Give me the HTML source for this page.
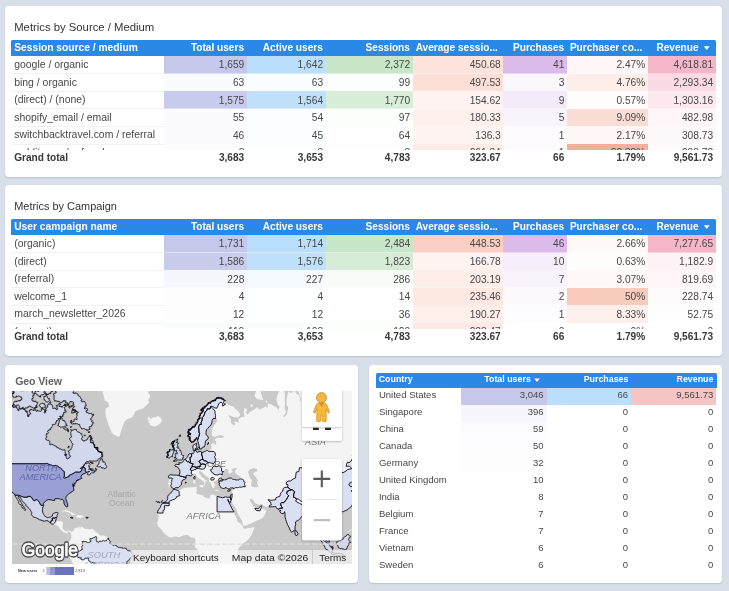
<!DOCTYPE html>
<html><head><meta charset="utf-8"><title>Dashboard</title>
<style>
html,body{margin:0;padding:0;}
body{width:729px;height:591px;overflow:hidden;background:#d9dfe8;font-family:"Liberation Sans",sans-serif;position:relative;}
#w{position:absolute;left:0;top:0;width:729px;height:591px;will-change:transform;}
.card{position:absolute;background:#fff;border-radius:4px;box-shadow:0 1px 1.5px rgba(120,130,150,.32);}
.t{position:absolute;white-space:nowrap;line-height:1;}
.c{position:absolute;}
.title{font-size:11.3px;color:#333;}
.hd{position:absolute;background:#2a88e6;border-radius:1.5px 1.5px 0 0;}
.h{font-weight:bold;color:#fff;font-size:10.1px;}
.v{font-size:10.45px;color:#484848;}
.n{font-size:10.2px;color:#484848;}
.b{font-size:10.1px;font-weight:bold;color:#383838;}
.ln{position:absolute;height:1px;background:#f5f5f5;}
</style></head>
<body>
<div id="w">
<div class="card" style="left:5px;top:6px;width:717px;height:171px"></div>
<div class="t title" style="left:14.2px;top:22.0px;">Metrics by Source / Medium</div>
<div class="hd" style="left:11px;top:40.4px;width:704.6px;height:15.6px"></div>
<div class="t h" style="left:14.2px;top:43.3px;font-size:10.25px">Session source / medium</div>
<div class="t h" style="right:485.0px;top:43.3px;">Total users</div>
<div class="t h" style="right:406.2px;top:43.3px;">Active users</div>
<div class="t h" style="right:319.1px;top:43.3px;">Sessions</div>
<div class="t h" style="left:415.7px;top:43.3px;">Average sessio...</div>
<div class="t h" style="right:164.89999999999998px;top:43.3px;">Purchases</div>
<div class="t h" style="left:569.9px;top:43.3px;">Purchaser co...</div>
<div class="t h" style="right:30.5px;top:43.3px;">Revenue</div>
<div class="c" style="left:703.8px;top:46.2px;width:5.9px;height:3.9px;background:#fff;clip-path:polygon(0 0,100% 0,50% 100%)"></div>
<div class="c" style="left:11px;top:56px;width:704.6px;height:93.6px;overflow:hidden">
<div class="c" style="left:153.3px;top:0.0px;width:82.5px;height:17.6px;background:#c5c8ea"></div>
<div class="c" style="left:235.8px;top:0.0px;width:78.8px;height:17.6px;background:#bbdefb"></div>
<div class="c" style="left:314.6px;top:0.0px;width:87.1px;height:17.6px;background:#c8e6c9"></div>
<div class="c" style="left:401.7px;top:0.0px;width:90.6px;height:17.6px;background:#fde3dc"></div>
<div class="c" style="left:492.3px;top:0.0px;width:63.6px;height:17.6px;background:#dbbbe9"></div>
<div class="c" style="left:555.9px;top:0.0px;width:80.9px;height:17.6px;background:#fef7f5"></div>
<div class="c" style="left:636.8px;top:0.0px;width:67.8px;height:17.6px;background:#f5b6c9"></div>
<div class="ln" style="left:0;top:17.1px;width:153.3px;background:#f1f1f1"></div>
<div class="ln" style="left:153.3px;top:17.1px;width:551.3px;background:rgba(255,255,255,.42)"></div>
<div class="t v" style="left:3.2px;top:4.0px">google / organic</div>
<div class="t n" style="right:471.3px;top:4.3px">1,659</div>
<div class="t n" style="right:392.5px;top:4.3px">1,642</div>
<div class="t n" style="right:305.4px;top:4.3px">2,372</div>
<div class="t n" style="right:214.8px;top:4.3px">450.68</div>
<div class="t n" style="right:151.2px;top:4.3px">41</div>
<div class="t n" style="right:70.3px;top:4.3px">2.47%</div>
<div class="t n" style="right:2.5px;top:4.3px">4,618.81</div>
<div class="c" style="left:153.3px;top:17.6px;width:82.5px;height:17.6px;background:#fafbfd"></div>
<div class="c" style="left:235.8px;top:17.6px;width:78.8px;height:17.6px;background:#fafdff"></div>
<div class="c" style="left:314.6px;top:17.6px;width:87.1px;height:17.6px;background:#fcfefc"></div>
<div class="c" style="left:401.7px;top:17.6px;width:90.6px;height:17.6px;background:#fcdfd7"></div>
<div class="c" style="left:492.3px;top:17.6px;width:63.6px;height:17.6px;background:#fbf8fd"></div>
<div class="c" style="left:555.9px;top:17.6px;width:80.9px;height:17.6px;background:#fdeee9"></div>
<div class="c" style="left:636.8px;top:17.6px;width:67.8px;height:17.6px;background:#fadae4"></div>
<div class="ln" style="left:0;top:34.7px;width:153.3px;background:#f1f1f1"></div>
<div class="ln" style="left:153.3px;top:34.7px;width:551.3px;background:rgba(255,255,255,.42)"></div>
<div class="t v" style="left:3.2px;top:21.6px">bing / organic</div>
<div class="t n" style="right:471.3px;top:21.9px">63</div>
<div class="t n" style="right:392.5px;top:21.9px">63</div>
<div class="t n" style="right:305.4px;top:21.9px">99</div>
<div class="t n" style="right:214.8px;top:21.9px">497.53</div>
<div class="t n" style="right:151.2px;top:21.9px">3</div>
<div class="t n" style="right:70.3px;top:21.9px">4.76%</div>
<div class="t n" style="right:2.5px;top:21.9px">2,293.34</div>
<div class="c" style="left:153.3px;top:35.2px;width:82.5px;height:17.6px;background:#c8cbeb"></div>
<div class="c" style="left:235.8px;top:35.2px;width:78.8px;height:17.6px;background:#bee0fb"></div>
<div class="c" style="left:314.6px;top:35.2px;width:87.1px;height:17.6px;background:#d8eed9"></div>
<div class="c" style="left:401.7px;top:35.2px;width:90.6px;height:17.6px;background:#fef3f1"></div>
<div class="c" style="left:492.3px;top:35.2px;width:63.6px;height:17.6px;background:#f4ebf8"></div>
<div class="c" style="left:555.9px;top:35.2px;width:80.9px;height:17.6px;background:#fffcfb"></div>
<div class="c" style="left:636.8px;top:35.2px;width:67.8px;height:17.6px;background:#fce9ef"></div>
<div class="ln" style="left:0;top:52.3px;width:153.3px;background:#f1f1f1"></div>
<div class="ln" style="left:153.3px;top:52.3px;width:551.3px;background:rgba(255,255,255,.42)"></div>
<div class="t v" style="left:3.2px;top:39.2px">(direct) / (none)</div>
<div class="t n" style="right:471.3px;top:39.5px">1,575</div>
<div class="t n" style="right:392.5px;top:39.5px">1,564</div>
<div class="t n" style="right:305.4px;top:39.5px">1,770</div>
<div class="t n" style="right:214.8px;top:39.5px">154.62</div>
<div class="t n" style="right:151.2px;top:39.5px">9</div>
<div class="t n" style="right:70.3px;top:39.5px">0.57%</div>
<div class="t n" style="right:2.5px;top:39.5px">1,303.16</div>
<div class="c" style="left:153.3px;top:52.8px;width:82.5px;height:17.6px;background:#fbfbfe"></div>
<div class="c" style="left:235.8px;top:52.8px;width:78.8px;height:17.6px;background:#fbfdff"></div>
<div class="c" style="left:314.6px;top:52.8px;width:87.1px;height:17.6px;background:#fcfefc"></div>
<div class="c" style="left:401.7px;top:52.8px;width:90.6px;height:17.6px;background:#fef1ed"></div>
<div class="c" style="left:492.3px;top:52.8px;width:63.6px;height:17.6px;background:#f9f3fb"></div>
<div class="c" style="left:555.9px;top:52.8px;width:80.9px;height:17.6px;background:#faded5"></div>
<div class="c" style="left:636.8px;top:52.8px;width:67.8px;height:17.6px;background:#fef6f9"></div>
<div class="ln" style="left:0;top:69.9px;width:153.3px;background:#f1f1f1"></div>
<div class="ln" style="left:153.3px;top:69.9px;width:551.3px;background:rgba(255,255,255,.42)"></div>
<div class="t v" style="left:3.2px;top:56.8px">shopify_email / email</div>
<div class="t n" style="right:471.3px;top:57.1px">55</div>
<div class="t n" style="right:392.5px;top:57.1px">54</div>
<div class="t n" style="right:305.4px;top:57.1px">97</div>
<div class="t n" style="right:214.8px;top:57.1px">180.33</div>
<div class="t n" style="right:151.2px;top:57.1px">5</div>
<div class="t n" style="right:70.3px;top:57.1px">9.09%</div>
<div class="t n" style="right:2.5px;top:57.1px">482.98</div>
<div class="c" style="left:153.3px;top:70.4px;width:82.5px;height:17.6px;background:#fbfbfe"></div>
<div class="c" style="left:235.8px;top:70.4px;width:78.8px;height:17.6px;background:#fbfdff"></div>
<div class="c" style="left:314.6px;top:70.4px;width:87.1px;height:17.6px;background:#fdfefd"></div>
<div class="c" style="left:401.7px;top:70.4px;width:90.6px;height:17.6px;background:#fef5f3"></div>
<div class="c" style="left:492.3px;top:70.4px;width:63.6px;height:17.6px;background:#fdfbfe"></div>
<div class="c" style="left:555.9px;top:70.4px;width:80.9px;height:17.6px;background:#fef7f5"></div>
<div class="c" style="left:636.8px;top:70.4px;width:67.8px;height:17.6px;background:#fef9fb"></div>
<div class="ln" style="left:0;top:87.5px;width:153.3px;background:#f1f1f1"></div>
<div class="ln" style="left:153.3px;top:87.5px;width:551.3px;background:rgba(255,255,255,.42)"></div>
<div class="t v" style="left:3.2px;top:74.4px">switchbacktravel.com / referral</div>
<div class="t n" style="right:471.3px;top:74.7px">46</div>
<div class="t n" style="right:392.5px;top:74.7px">45</div>
<div class="t n" style="right:305.4px;top:74.7px">64</div>
<div class="t n" style="right:214.8px;top:74.7px">136.3</div>
<div class="t n" style="right:151.2px;top:74.7px">1</div>
<div class="t n" style="right:70.3px;top:74.7px">2.17%</div>
<div class="t n" style="right:2.5px;top:74.7px">308.73</div>
<div class="c" style="left:153.3px;top:88.0px;width:82.5px;height:17.6px;background:#fdfdfe"></div>
<div class="c" style="left:235.8px;top:88.0px;width:78.8px;height:17.6px;background:#fcfeff"></div>
<div class="c" style="left:314.6px;top:88.0px;width:87.1px;height:17.6px;background:#fdfefd"></div>
<div class="c" style="left:401.7px;top:88.0px;width:90.6px;height:17.6px;background:#fdece7"></div>
<div class="c" style="left:492.3px;top:88.0px;width:63.6px;height:17.6px;background:#fdfbfe"></div>
<div class="c" style="left:555.9px;top:88.0px;width:80.9px;height:17.6px;background:#f4b09a"></div>
<div class="c" style="left:636.8px;top:88.0px;width:67.8px;height:17.6px;background:#fefbfc"></div>
<div class="ln" style="left:0;top:105.1px;width:153.3px;background:#f1f1f1"></div>
<div class="ln" style="left:153.3px;top:105.1px;width:551.3px;background:rgba(255,255,255,.42)"></div>
<div class="t v" style="left:3.2px;top:92.0px">reddit.com / referral</div>
<div class="t n" style="right:471.3px;top:92.3px">3</div>
<div class="t n" style="right:392.5px;top:92.3px">3</div>
<div class="t n" style="right:305.4px;top:92.3px">3</div>
<div class="t n" style="right:214.8px;top:92.3px">261.84</div>
<div class="t n" style="right:151.2px;top:92.3px">1</div>
<div class="t n" style="right:70.3px;top:92.3px">33.33%</div>
<div class="t n" style="right:2.5px;top:92.3px">233.78</div>
</div>
<div class="t b" style="left:14.2px;top:153.3px;">Grand total</div>
<div class="t b" style="right:484.79999999999995px;top:153.3px;">3,683</div>
<div class="t b" style="right:406.0px;top:153.3px;">3,653</div>
<div class="t b" style="right:318.90000000000003px;top:153.3px;">4,783</div>
<div class="t b" style="right:228.3px;top:153.3px;">323.67</div>
<div class="t b" style="right:164.70000000000005px;top:153.3px;">66</div>
<div class="t b" style="right:83.80000000000007px;top:153.3px;">1.79%</div>
<div class="t b" style="right:16.0px;top:153.3px;">9,561.73</div>
<div class="card" style="left:5px;top:185px;width:717px;height:171px"></div>
<div class="t title" style="left:14.2px;top:201.0px;font-size:10.95px">Metrics by Campaign</div>
<div class="hd" style="left:11px;top:219.4px;width:704.6px;height:15.6px"></div>
<div class="t h" style="left:14.2px;top:222.3px;font-size:10.25px">User campaign name</div>
<div class="t h" style="right:485.0px;top:222.3px;">Total users</div>
<div class="t h" style="right:406.2px;top:222.3px;">Active users</div>
<div class="t h" style="right:319.1px;top:222.3px;">Sessions</div>
<div class="t h" style="left:415.7px;top:222.3px;">Average sessio...</div>
<div class="t h" style="right:164.89999999999998px;top:222.3px;">Purchases</div>
<div class="t h" style="left:569.9px;top:222.3px;">Purchaser co...</div>
<div class="t h" style="right:30.5px;top:222.3px;">Revenue</div>
<div class="c" style="left:703.8px;top:225.2px;width:5.9px;height:3.9px;background:#fff;clip-path:polygon(0 0,100% 0,50% 100%)"></div>
<div class="c" style="left:11px;top:235px;width:704.6px;height:93.6px;overflow:hidden">
<div class="c" style="left:153.3px;top:0.0px;width:82.5px;height:17.6px;background:#c5c8ea"></div>
<div class="c" style="left:235.8px;top:0.0px;width:78.8px;height:17.6px;background:#bbdefb"></div>
<div class="c" style="left:314.6px;top:0.0px;width:87.1px;height:17.6px;background:#c8e6c9"></div>
<div class="c" style="left:401.7px;top:0.0px;width:90.6px;height:17.6px;background:#fbcfc3"></div>
<div class="c" style="left:492.3px;top:0.0px;width:63.6px;height:17.6px;background:#dbbbe9"></div>
<div class="c" style="left:555.9px;top:0.0px;width:80.9px;height:17.6px;background:#fef9f8"></div>
<div class="c" style="left:636.8px;top:0.0px;width:67.8px;height:17.6px;background:#f5b6c9"></div>
<div class="ln" style="left:0;top:17.1px;width:153.3px;background:#f1f1f1"></div>
<div class="ln" style="left:153.3px;top:17.1px;width:551.3px;background:rgba(255,255,255,.42)"></div>
<div class="t v" style="left:3.2px;top:4.0px">(organic)</div>
<div class="t n" style="right:471.3px;top:4.3px">1,731</div>
<div class="t n" style="right:392.5px;top:4.3px">1,714</div>
<div class="t n" style="right:305.4px;top:4.3px">2,484</div>
<div class="t n" style="right:214.8px;top:4.3px">448.53</div>
<div class="t n" style="right:151.2px;top:4.3px">46</div>
<div class="t n" style="right:70.3px;top:4.3px">2.66%</div>
<div class="t n" style="right:2.5px;top:4.3px">7,277.65</div>
<div class="c" style="left:153.3px;top:17.6px;width:82.5px;height:17.6px;background:#caccec"></div>
<div class="c" style="left:235.8px;top:17.6px;width:78.8px;height:17.6px;background:#c0e1fb"></div>
<div class="c" style="left:314.6px;top:17.6px;width:87.1px;height:17.6px;background:#d6ecd6"></div>
<div class="c" style="left:401.7px;top:17.6px;width:90.6px;height:17.6px;background:#fef3f1"></div>
<div class="c" style="left:492.3px;top:17.6px;width:63.6px;height:17.6px;background:#f6eefa"></div>
<div class="c" style="left:555.9px;top:17.6px;width:80.9px;height:17.6px;background:#fffdfc"></div>
<div class="c" style="left:636.8px;top:17.6px;width:67.8px;height:17.6px;background:#fdf3f6"></div>
<div class="ln" style="left:0;top:34.7px;width:153.3px;background:#f1f1f1"></div>
<div class="ln" style="left:153.3px;top:34.7px;width:551.3px;background:rgba(255,255,255,.42)"></div>
<div class="t v" style="left:3.2px;top:21.6px">(direct)</div>
<div class="t n" style="right:471.3px;top:21.9px">1,586</div>
<div class="t n" style="right:392.5px;top:21.9px">1,576</div>
<div class="t n" style="right:305.4px;top:21.9px">1,823</div>
<div class="t n" style="right:214.8px;top:21.9px">166.78</div>
<div class="t n" style="right:151.2px;top:21.9px">10</div>
<div class="t n" style="right:70.3px;top:21.9px">0.63%</div>
<div class="t n" style="right:2.5px;top:21.9px">1,182.9</div>
<div class="c" style="left:153.3px;top:35.2px;width:82.5px;height:17.6px;background:#f6f7fc"></div>
<div class="c" style="left:235.8px;top:35.2px;width:78.8px;height:17.6px;background:#f5fafe"></div>
<div class="c" style="left:314.6px;top:35.2px;width:87.1px;height:17.6px;background:#f8fcf9"></div>
<div class="c" style="left:401.7px;top:35.2px;width:90.6px;height:17.6px;background:#feeee9"></div>
<div class="c" style="left:492.3px;top:35.2px;width:63.6px;height:17.6px;background:#f9f3fb"></div>
<div class="c" style="left:555.9px;top:35.2px;width:80.9px;height:17.6px;background:#fef8f6"></div>
<div class="c" style="left:636.8px;top:35.2px;width:67.8px;height:17.6px;background:#fef6f9"></div>
<div class="ln" style="left:0;top:52.3px;width:153.3px;background:#f1f1f1"></div>
<div class="ln" style="left:153.3px;top:52.3px;width:551.3px;background:rgba(255,255,255,.42)"></div>
<div class="t v" style="left:3.2px;top:39.2px">(referral)</div>
<div class="t n" style="right:471.3px;top:39.5px">228</div>
<div class="t n" style="right:392.5px;top:39.5px">227</div>
<div class="t n" style="right:305.4px;top:39.5px">286</div>
<div class="t n" style="right:214.8px;top:39.5px">203.19</div>
<div class="t n" style="right:151.2px;top:39.5px">7</div>
<div class="t n" style="right:70.3px;top:39.5px">3.07%</div>
<div class="t n" style="right:2.5px;top:39.5px">819.69</div>
<div class="c" style="left:153.3px;top:52.8px;width:82.5px;height:17.6px;background:#fdfdfe"></div>
<div class="c" style="left:235.8px;top:52.8px;width:78.8px;height:17.6px;background:#fdfeff"></div>
<div class="c" style="left:314.6px;top:52.8px;width:87.1px;height:17.6px;background:#fefefe"></div>
<div class="c" style="left:401.7px;top:52.8px;width:90.6px;height:17.6px;background:#fde8e2"></div>
<div class="c" style="left:492.3px;top:52.8px;width:63.6px;height:17.6px;background:#fcfafd"></div>
<div class="c" style="left:555.9px;top:52.8px;width:80.9px;height:17.6px;background:#f8cbbc"></div>
<div class="c" style="left:636.8px;top:52.8px;width:67.8px;height:17.6px;background:#fefbfc"></div>
<div class="ln" style="left:0;top:69.9px;width:153.3px;background:#f1f1f1"></div>
<div class="ln" style="left:153.3px;top:69.9px;width:551.3px;background:rgba(255,255,255,.42)"></div>
<div class="t v" style="left:3.2px;top:56.8px">welcome_1</div>
<div class="t n" style="right:471.3px;top:57.1px">4</div>
<div class="t n" style="right:392.5px;top:57.1px">4</div>
<div class="t n" style="right:305.4px;top:57.1px">14</div>
<div class="t n" style="right:214.8px;top:57.1px">235.46</div>
<div class="t n" style="right:151.2px;top:57.1px">2</div>
<div class="t n" style="right:70.3px;top:57.1px">50%</div>
<div class="t n" style="right:2.5px;top:57.1px">228.74</div>
<div class="c" style="left:153.3px;top:70.4px;width:82.5px;height:17.6px;background:#fdfdfe"></div>
<div class="c" style="left:235.8px;top:70.4px;width:78.8px;height:17.6px;background:#fcfeff"></div>
<div class="c" style="left:314.6px;top:70.4px;width:87.1px;height:17.6px;background:#fdfefd"></div>
<div class="c" style="left:401.7px;top:70.4px;width:90.6px;height:17.6px;background:#feefeb"></div>
<div class="c" style="left:492.3px;top:70.4px;width:63.6px;height:17.6px;background:#fdfcfe"></div>
<div class="c" style="left:555.9px;top:70.4px;width:80.9px;height:17.6px;background:#fdefeb"></div>
<div class="c" style="left:636.8px;top:70.4px;width:67.8px;height:17.6px;background:#fffdfd"></div>
<div class="ln" style="left:0;top:87.5px;width:153.3px;background:#f1f1f1"></div>
<div class="ln" style="left:153.3px;top:87.5px;width:551.3px;background:rgba(255,255,255,.42)"></div>
<div class="t v" style="left:3.2px;top:74.4px">march_newsletter_2026</div>
<div class="t n" style="right:471.3px;top:74.7px">12</div>
<div class="t n" style="right:392.5px;top:74.7px">12</div>
<div class="t n" style="right:305.4px;top:74.7px">36</div>
<div class="t n" style="right:214.8px;top:74.7px">190.27</div>
<div class="t n" style="right:151.2px;top:74.7px">1</div>
<div class="t n" style="right:70.3px;top:74.7px">8.33%</div>
<div class="t n" style="right:2.5px;top:74.7px">52.75</div>
<div class="c" style="left:153.3px;top:88.0px;width:82.5px;height:17.6px;background:#fafbfd"></div>
<div class="c" style="left:235.8px;top:88.0px;width:78.8px;height:17.6px;background:#fafcff"></div>
<div class="c" style="left:314.6px;top:88.0px;width:87.1px;height:17.6px;background:#fcfefc"></div>
<div class="c" style="left:401.7px;top:88.0px;width:90.6px;height:17.6px;background:#fde9e4"></div>
<div class="ln" style="left:0;top:105.1px;width:153.3px;background:#f1f1f1"></div>
<div class="ln" style="left:153.3px;top:105.1px;width:551.3px;background:rgba(255,255,255,.42)"></div>
<div class="t v" style="left:3.2px;top:92.0px">(not set)</div>
<div class="t n" style="right:471.3px;top:92.3px">110</div>
<div class="t n" style="right:392.5px;top:92.3px">108</div>
<div class="t n" style="right:305.4px;top:92.3px">120</div>
<div class="t n" style="right:214.8px;top:92.3px">223.47</div>
<div class="t n" style="right:151.2px;top:92.3px">0</div>
<div class="t n" style="right:70.3px;top:92.3px">0%</div>
<div class="t n" style="right:2.5px;top:92.3px">0</div>
</div>
<div class="t b" style="left:14.2px;top:332.3px;">Grand total</div>
<div class="t b" style="right:484.79999999999995px;top:332.3px;">3,683</div>
<div class="t b" style="right:406.0px;top:332.3px;">3,653</div>
<div class="t b" style="right:318.90000000000003px;top:332.3px;">4,783</div>
<div class="t b" style="right:228.3px;top:332.3px;">323.67</div>
<div class="t b" style="right:164.70000000000005px;top:332.3px;">66</div>
<div class="t b" style="right:83.80000000000007px;top:332.3px;">1.79%</div>
<div class="t b" style="right:16.0px;top:332.3px;">9,561.73</div>
<div class="card" style="left:368.5px;top:365px;width:353.5px;height:217.5px"></div>
<div class="hd" style="left:376px;top:372.5px;width:340.5px;height:15px"></div>
<div class="t h" style="left:378.7px;top:375.1px;font-size:8.85px">Country</div>
<div class="t h" style="right:198.20000000000005px;top:375.1px;font-size:8.85px">Total users</div>
<div class="c" style="left:534.2px;top:378.4px;width:5.6px;height:3.6px;background:#fff;clip-path:polygon(0 0,100% 0,50% 100%)"></div>
<div class="t h" style="right:100.60000000000002px;top:375.1px;font-size:8.85px">Purchases</div>
<div class="t h" style="right:15.600000000000023px;top:375.1px;font-size:8.85px">Revenue</div>
<div class="c" style="left:461.2px;top:387.5px;width:85.5px;height:17.0px;background:#c5c8ea"></div>
<div class="c" style="left:546.7px;top:387.5px;width:84.5px;height:17.0px;background:#bbdefb"></div>
<div class="c" style="left:631.2px;top:387.5px;width:85.3px;height:17.0px;background:#f5c4c4"></div>
<div class="t v" style="left:378.9px;top:390.3px;font-size:9.55px">United States</div>
<div class="t v" style="right:185.5px;top:390.3px;font-size:9.5px">3,046</div>
<div class="t v" style="right:101.0px;top:390.3px;font-size:9.5px">66</div>
<div class="t v" style="right:15.700000000000045px;top:390.3px;font-size:9.5px">9,561.73</div>
<div class="c" style="left:461.2px;top:404.5px;width:85.5px;height:17.0px;background:#f6f6fc"></div>
<div class="t v" style="left:378.9px;top:407.3px;font-size:9.55px">Singapore</div>
<div class="t v" style="right:185.5px;top:407.3px;font-size:9.5px">396</div>
<div class="t v" style="right:101.0px;top:407.3px;font-size:9.5px">0</div>
<div class="t v" style="right:15.700000000000045px;top:407.3px;font-size:9.5px">0</div>
<div class="c" style="left:461.2px;top:421.5px;width:85.5px;height:17.0px;background:#fcfcfe"></div>
<div class="t v" style="left:378.9px;top:424.3px;font-size:9.55px">China</div>
<div class="t v" style="right:185.5px;top:424.3px;font-size:9.5px">59</div>
<div class="t v" style="right:101.0px;top:424.3px;font-size:9.5px">0</div>
<div class="t v" style="right:15.700000000000045px;top:424.3px;font-size:9.5px">0</div>
<div class="c" style="left:461.2px;top:438.5px;width:85.5px;height:17.0px;background:#fdfdfe"></div>
<div class="t v" style="left:378.9px;top:441.3px;font-size:9.55px">Canada</div>
<div class="t v" style="right:185.5px;top:441.3px;font-size:9.5px">50</div>
<div class="t v" style="right:101.0px;top:441.3px;font-size:9.5px">0</div>
<div class="t v" style="right:15.700000000000045px;top:441.3px;font-size:9.5px">0</div>
<div class="c" style="left:461.2px;top:455.5px;width:85.5px;height:17.0px;background:#fdfdfe"></div>
<div class="t v" style="left:378.9px;top:458.3px;font-size:9.55px">Germany</div>
<div class="t v" style="right:185.5px;top:458.3px;font-size:9.5px">32</div>
<div class="t v" style="right:101.0px;top:458.3px;font-size:9.5px">0</div>
<div class="t v" style="right:15.700000000000045px;top:458.3px;font-size:9.5px">0</div>
<div class="c" style="left:461.2px;top:472.5px;width:85.5px;height:17.0px;background:#fefeff"></div>
<div class="t v" style="left:378.9px;top:475.3px;font-size:9.55px">United Kingdom</div>
<div class="t v" style="right:185.5px;top:475.3px;font-size:9.5px">10</div>
<div class="t v" style="right:101.0px;top:475.3px;font-size:9.5px">0</div>
<div class="t v" style="right:15.700000000000045px;top:475.3px;font-size:9.5px">0</div>
<div class="c" style="left:461.2px;top:489.5px;width:85.5px;height:17.0px;background:#fefeff"></div>
<div class="t v" style="left:378.9px;top:492.3px;font-size:9.55px">India</div>
<div class="t v" style="right:185.5px;top:492.3px;font-size:9.5px">8</div>
<div class="t v" style="right:101.0px;top:492.3px;font-size:9.5px">0</div>
<div class="t v" style="right:15.700000000000045px;top:492.3px;font-size:9.5px">0</div>
<div class="c" style="left:461.2px;top:506.5px;width:85.5px;height:17.0px;background:#fefeff"></div>
<div class="t v" style="left:378.9px;top:509.3px;font-size:9.55px">Belgium</div>
<div class="t v" style="right:185.5px;top:509.3px;font-size:9.5px">7</div>
<div class="t v" style="right:101.0px;top:509.3px;font-size:9.5px">0</div>
<div class="t v" style="right:15.700000000000045px;top:509.3px;font-size:9.5px">0</div>
<div class="c" style="left:461.2px;top:523.5px;width:85.5px;height:17.0px;background:#fefeff"></div>
<div class="t v" style="left:378.9px;top:526.3px;font-size:9.55px">France</div>
<div class="t v" style="right:185.5px;top:526.3px;font-size:9.5px">7</div>
<div class="t v" style="right:101.0px;top:526.3px;font-size:9.5px">0</div>
<div class="t v" style="right:15.700000000000045px;top:526.3px;font-size:9.5px">0</div>
<div class="c" style="left:461.2px;top:540.5px;width:85.5px;height:17.0px;background:#fefeff"></div>
<div class="t v" style="left:378.9px;top:543.3px;font-size:9.55px">Vietnam</div>
<div class="t v" style="right:185.5px;top:543.3px;font-size:9.5px">6</div>
<div class="t v" style="right:101.0px;top:543.3px;font-size:9.5px">0</div>
<div class="t v" style="right:15.700000000000045px;top:543.3px;font-size:9.5px">0</div>
<div class="c" style="left:461.2px;top:557.5px;width:85.5px;height:17.0px;background:#fefeff"></div>
<div class="t v" style="left:378.9px;top:560.3px;font-size:9.55px">Sweden</div>
<div class="t v" style="right:185.5px;top:560.3px;font-size:9.5px">6</div>
<div class="t v" style="right:101.0px;top:560.3px;font-size:9.5px">0</div>
<div class="t v" style="right:15.700000000000045px;top:560.3px;font-size:9.5px">0</div>
<div class="card" style="left:5px;top:365px;width:353px;height:217.5px"></div>
<div class="t " style="left:15.2px;top:376.4px;font-size:10.6px;color:#636363;font-weight:bold;letter-spacing:-.1px">Geo View</div>
<svg style="position:absolute;left:12px;top:390.5px" width="340" height="173.1" viewBox="0 0 340 173.1" font-family="Liberation Sans, sans-serif">
<rect width="340" height="173.1" fill="#c9c9c9"/>
<path d="M65.7,-34.1L72.8,-17.9L84.2,-17.9L88.4,-9.5L89.9,-1.9L91.6,5.1L92.7,9.5L96.3,11.6L97.0,15.6L93.7,17.6L93.4,23.2L94.8,28.5L96.3,33.5L98.4,38.3L99.8,41.9L101.9,43.4L104.1,44.8L106.2,46.0L107.9,45.1L108.6,41.3L109.8,37.4L111.5,33.5L112.6,30.2L115.5,27.9L118.3,27.2L121.1,25.0L123.3,20.3L126.8,18.8L131.1,17.6L133.9,14.9L137.1,11.6L136.1,9.5L138.2,5.1L136.1,1.4L137.5,-1.9L139.6,-9.5L142.5,-24.0L141.1,-45.5L84.2,-63.8ZM134.9,28.2L136.8,25.4L138.9,28.2L140.6,26.5L143.9,26.1L146.3,25.0L148.6,26.8L150.0,29.6L148.9,31.9L146.7,33.5L143.2,35.5L140.6,35.2L137.5,33.9L138.2,32.2L135.4,30.6L137.9,29.2ZM38.4,132.0L42.6,131.4L44.1,130.2L47.2,130.1L49.3,130.2L50.9,131.1L51.0,132.6L50.5,135.1L50.5,137.3L51.9,139.1L53.2,140.1L54.6,140.3L56.0,139.4L57.4,139.4L59.3,140.6L59.7,141.7L58.7,142.7L58.1,141.3L56.7,140.3L55.2,141.2L55.4,142.4L53.6,142.0L51.7,141.3L50.6,140.6L49.0,139.1L47.5,138.4L47.5,137.0L46.2,135.5L44.9,134.4L43.6,134.1L41.8,133.5L39.7,132.9ZM48.8,121.1L51.2,119.5L53.6,119.1L56.4,119.8L59.3,121.2L61.8,122.4L64.0,123.7L62.1,124.1L59.1,124.1L59.7,122.9L57.9,121.7L55.0,120.9L52.9,120.3L50.7,120.6ZM63.7,126.2L65.1,124.1L67.5,124.3L70.1,124.6L72.2,126.1L69.9,126.5L67.8,127.4L66.4,126.7ZM59.7,141.7L60.1,140.7L61.8,139.3L62.1,137.8L63.1,137.1L65.3,136.8L66.8,135.8L68.1,135.2L67.2,136.7L67.8,137.5L68.5,136.4L69.9,135.5L70.5,136.5L72.4,137.3L72.8,138.0L75.3,137.8L77.3,138.6L79.2,137.8L81.3,137.7L80.5,138.4L82.0,139.1L83.0,139.9L83.9,140.9L86.2,142.6L88.1,144.5L91.0,144.6L92.7,144.7L94.8,145.7L96.3,146.9L97.3,149.4L98.4,150.7L98.0,152.6L99.8,153.3L100.8,154.1L102.7,154.0L104.8,155.0L106.2,156.4L107.9,156.4L110.1,157.1L112.6,157.1L114.7,158.3L116.6,159.8L119.2,160.4L119.9,163.0L119.6,165.9L117.6,168.2L116.2,169.9L114.6,171.6L114.0,174.3L114.0,177.5L113.0,179.8L112.6,185.1L69.9,185.1L69.5,179.5L67.1,177.8L62.8,175.3L61.1,172.8L59.7,170.2L57.9,166.6L56.0,163.3L54.3,161.5L53.9,159.4L55.4,157.7L54.4,156.1L54.4,154.4L55.7,151.9L57.4,150.4L59.3,147.3L59.3,143.7L58.7,142.7ZM213.4,13.2L215.0,12.0L216.4,14.0L219.3,14.9L221.4,15.6L223.5,18.0L226.4,20.3L228.1,23.2L227.8,25.0L226.4,26.5L223.5,26.5L220.7,25.8L218.6,24.7L216.4,24.3L215.7,22.9L217.1,25.8L219.0,28.5L218.9,31.9L220.7,33.5L222.5,34.2L223.3,32.2L221.4,30.9L223.5,30.6L226.1,31.6L227.1,31.6L226.4,28.5L228.5,26.8L230.7,25.8L232.1,26.5L232.5,24.0L231.7,21.4L232.4,17.6L231.1,17.2L234.2,17.6L235.3,19.5L233.5,21.0L235.6,23.6L237.8,21.0L240.6,19.5L243.5,17.6L245.6,16.0L247.0,18.4L250.6,17.2L253.4,15.6L255.5,16.8L256.0,12.4L259.1,13.2L261.9,14.9L264.8,16.4L266.5,18.8L267.6,16.0L265.5,13.2L264.5,9.1L265.1,5.1L266.9,0.5L269.1,-3.4L271.9,-1.4L273.0,2.8L272.8,7.3L273.0,13.6L272.6,17.6L274.2,21.4L271.2,25.4L272.6,26.1L274.7,23.6L275.5,20.3L276.2,16.4L274.7,14.4L274.5,9.5L275.2,5.1L276.2,0.5L279.0,1.9L280.4,1.0L282.6,-0.4L284.3,2.8L286.8,4.2L288.0,8.2L288.3,11.6L289.0,8.2L287.5,3.8L286.1,-0.4L284.7,-4.4L291.8,-6.9L304.6,-17.9L318.8,-30.6L330.2,-17.9L330.2,-6.9L337.3,-4.4L347.3,-4.4L347.3,-1.9L347.3,90.8L343.4,89.9L341.9,89.2L339.5,91.2L337.3,92.3L336.9,93.8L338.7,95.9L341.3,94.9L343.7,96.3L340.9,98.1L339.2,99.8L340.6,101.5L341.6,104.1L343.0,106.6L342.3,108.2L343.0,109.1L340.9,112.3L339.5,115.5L337.3,117.0L335.9,118.6L333.1,119.8L331.6,120.5L327.4,121.7L325.9,123.5L325.5,121.7L323.8,121.4L321.7,122.4L319.8,125.5L321.0,127.7L323.5,129.9L324.8,134.4L324.5,136.5L321.7,138.1L319.3,140.6L318.5,138.7L316.7,137.8L315.3,135.8L313.1,134.8L313.0,133.8L311.7,133.8L310.7,137.3L310.7,139.9L312.1,141.2L313.1,143.3L315.0,144.2L316.6,146.6L316.7,149.0L317.7,151.0L316.7,151.2L313.6,149.0L312.4,146.6L312.1,144.5L311.3,143.6L309.3,141.6L309.6,138.7L309.9,135.8L308.5,131.4L308.2,129.2L307.2,128.5L305.2,130.2L303.6,129.9L303.6,126.2L302.5,124.3L300.8,122.4L300.1,120.5L298.2,120.1L296.1,121.2L296.1,121.2L295.1,121.4L293.2,121.7L292.5,123.7L290.4,124.7L289.0,126.7L286.5,129.1L285.0,129.9L283.4,131.0L283.7,133.6L283.0,135.8L283.1,138.3L282.1,139.7L280.7,140.3L279.7,141.4L278.0,139.0L276.9,136.1L275.5,133.6L274.5,130.7L273.7,128.5L273.0,125.5L273.0,122.4L272.6,120.6L271.9,122.4L269.5,122.6L267.6,120.5L269.1,119.7L267.6,119.2L266.5,118.3L266.5,118.3L265.4,118.0L264.4,116.6L263.9,115.6L260.5,115.8L257.1,115.9L257.1,115.9L253.4,115.6L250.9,114.7L250.1,113.1L247.4,113.7L244.9,113.1L242.7,111.8L241.3,109.1L239.2,107.7L237.8,108.2L238.2,110.2L240.2,113.1L240.9,114.2L241.7,116.3L242.2,114.7L242.9,115.8L242.5,117.2L242.9,117.5L244.3,117.5L246.3,117.5L248.3,115.6L249.3,114.5L249.7,115.3L249.7,116.6L251.3,118.1L252.8,118.4L254.5,120.1L252.8,123.4L251.7,125.5L250.6,127.1L247.7,128.5L243.7,129.9L239.2,132.6L234.2,134.4L231.4,134.8L230.7,132.9L230.2,129.9L227.8,126.2L225.3,121.7L224.3,118.1L222.4,115.5L220.0,111.5L219.1,109.1L218.3,111.7L217.1,111.0L215.9,108.2L215.9,108.2L215.4,106.3L218.1,106.1L219.1,104.1L220.1,100.7L220.4,97.5L221.0,96.6L220.0,97.0L218.6,96.8L217.4,97.7L216.1,98.1L215.0,97.2L213.0,96.6L212.6,97.5L211.0,97.5L209.3,96.8L208.3,96.3L208.2,94.9L206.9,94.0L207.6,91.8L206.8,91.8L206.8,90.8L208.6,90.1L210.7,89.9L210.9,88.6L214.0,88.6L216.9,87.1L219.3,87.1L221.4,88.4L224.3,89.0L226.4,89.0L228.5,88.0L228.7,86.1L226.1,84.2L223.8,82.4L222.7,80.8L224.0,78.7L225.4,76.7L223.5,76.9L220.0,78.1L219.3,80.0L221.3,80.6L219.7,81.4L217.4,82.4L215.7,80.4L217.3,78.9L214.7,77.9L213.2,78.1L211.6,80.6L210.3,83.2L209.3,84.5L208.9,86.1L209.5,87.8L210.7,88.6L209.3,89.0L208.3,89.5L206.9,90.5L206.6,89.7L206.5,89.2L204.3,89.2L203.3,90.3L203.6,90.6L201.9,89.9L201.8,91.8L202.5,92.7L203.6,94.5L202.2,95.2L202.4,97.2L201.4,97.2L200.4,96.6L199.7,95.0L199.4,94.0L201.9,94.3L199.7,93.8L198.2,91.8L197.1,90.3L197.2,87.6L195.8,86.1L193.7,84.7L191.1,82.6L190.1,80.8L189.0,81.0L188.8,79.8L187.0,80.6L187.3,82.8L188.8,84.2L189.7,86.3L192.3,87.3L192.3,88.2L195.1,89.7L195.8,90.6L193.7,89.9L193.1,91.4L193.8,92.7L192.4,94.5L191.8,94.5L192.5,92.7L191.8,90.8L190.4,89.7L189.0,88.6L187.0,87.6L185.1,86.3L184.3,84.7L183.9,83.2L182.0,82.4L180.3,83.6L178.9,84.9L176.9,84.4L175.2,84.2L173.9,84.9L174.1,86.3L174.1,87.3L172.6,88.4L170.6,89.0L169.8,90.8L169.1,91.8L169.8,93.0L168.6,94.5L167.2,95.8L166.4,96.6L163.2,96.8L162.0,97.9L160.5,97.0L159.0,95.9L156.7,96.3L157.0,93.8L156.0,93.0L156.8,90.5L157.0,87.3L156.3,85.1L158.1,83.8L161.3,84.0L164.4,84.2L166.9,84.4L167.8,82.0L167.9,80.0L166.5,77.1L165.5,76.0L163.2,75.4L162.8,74.1L164.5,73.3L167.2,73.7L166.9,71.3L167.7,72.0L169.6,71.7L171.2,70.6L171.8,69.3L173.1,68.2L174.3,67.5L175.2,66.4L175.9,65.2L176.3,63.8L177.3,62.8L179.5,62.8L181.2,62.4L182.2,61.6L181.7,59.2L181.0,57.4L181.2,54.9L181.7,53.6L183.2,53.3L184.4,52.0L184.1,54.6L185.0,55.4L184.0,56.7L183.3,58.2L183.6,59.4L185.0,61.4L187.0,60.7L188.8,60.2L189.7,61.6L192.5,60.7L194.4,59.7L195.5,59.4L196.4,60.4L197.7,60.4L197.9,58.9L199.4,57.2L199.4,54.4L200.2,52.5L201.6,52.0L202.6,53.9L204.1,53.1L204.2,50.4L202.9,49.3L202.9,47.9L205.8,46.8L209.3,47.1L212.5,46.0L210.0,44.3L207.9,44.3L205.1,45.1L202.1,46.0L199.8,44.0L199.9,40.1L199.7,38.0L201.5,35.2L204.3,31.2L205.6,29.2L203.8,27.5L203.8,27.5L201.2,27.5L200.1,29.6L199.8,31.9L198.9,34.2L197.2,35.5L195.8,37.4L194.4,38.9L194.1,41.3L194.0,43.7L196.0,45.4L196.4,47.1L195.0,49.0L193.3,50.1L193.3,52.5L192.8,54.4L192.3,55.9L190.4,56.2L189.7,57.9L187.8,57.9L187.4,55.9L186.6,53.1L186.0,50.7L185.3,48.2L185.3,48.2L184.6,47.7L184.4,46.3L184.0,47.9L183.0,48.8L181.2,50.9L179.5,51.2L177.6,49.3L177.2,47.7L178.3,47.1L176.9,45.7L176.8,43.4L178.7,42.5L176.6,41.9L176.8,39.5L178.7,38.3L179.5,37.0L181.3,35.8L183.0,34.8L183.7,33.2L185.6,30.9L187.0,28.2L187.4,26.1L188.4,23.6L190.1,21.4L191.4,19.1L188.7,19.1L190.5,17.2L192.5,16.0L194.0,14.9L195.8,13.2L196.5,11.6L198.7,11.6L200.1,10.3L202.2,9.1L204.3,7.3L206.1,6.9L207.9,7.3L209.7,7.3L211.5,9.1L213.6,9.9L212.2,12.4L213.4,13.2ZM215.9,108.2L217.1,111.5L218.6,114.7L220.0,117.8L222.1,120.9L222.5,123.2L224.3,126.7L225.7,130.7L228.1,132.2L230.9,135.1L231.1,136.5L232.8,138.0L236.3,137.0L239.2,136.8L242.3,136.0L242.0,138.1L239.6,143.7L237.8,146.6L234.9,149.7L232.1,151.6L229.2,154.4L227.1,156.6L225.7,159.4L225.0,162.3L225.7,165.1L226.1,167.3L227.1,170.2L227.2,173.8L226.4,185.1L185.9,185.1L186.3,178.3L186.1,175.3L187.3,172.4L189.1,169.5L188.3,165.9L186.9,161.5L186.3,159.5L183.4,156.6L182.3,154.1L183.2,151.6L183.4,148.4L182.2,146.6L179.5,146.7L177.3,145.2L175.8,144.0L173.1,144.0L170.9,144.6L166.7,146.2L164.5,145.6L161.7,145.7L158.8,146.7L156.3,145.5L153.3,143.3L150.7,140.9L150.3,139.0L148.2,137.3L145.7,135.2L145.6,133.6L144.6,131.9L146.0,129.9L146.3,126.2L146.5,124.7L145.3,122.4L145.5,120.9L146.7,118.3L148.3,116.3L148.9,114.4L150.7,112.0L153.1,111.0L155.3,109.1L155.7,107.4L155.6,105.8L156.4,103.9L158.8,102.0L160.7,99.5L161.1,98.4L162.0,98.2L165.2,99.3L166.4,99.6L169.5,98.2L171.6,97.2L173.8,96.5L176.6,96.6L179.5,96.3L182.3,95.9L184.0,95.8L185.1,96.3L184.4,98.1L185.1,99.8L184.0,101.2L185.1,102.9L187.3,103.6L191.3,104.4L191.8,105.9L194.4,106.8L196.8,107.7L197.9,106.6L198.2,104.2L200.1,103.4L202.2,103.9L205.1,105.4L208.6,106.3L210.7,106.8L213.6,105.8L215.4,106.3ZM242.7,5.1L244.9,8.2L248.4,8.6L251.3,9.1L249.1,2.8L248.4,-3.4L252.0,-9.5L257.7,-16.7L266.2,-22.7L263.4,-25.3L254.8,-20.9L249.1,-13.9L246.3,-4.4L243.5,1.4ZM238.5,14.4L239.9,16.4L241.0,14.9L239.6,13.2ZM253.4,10.3L255.5,12.4L254.8,9.1ZM187.1,94.5L188.4,94.1L191.7,94.0L191.0,96.8L189.8,96.3L187.3,95.2ZM181.2,89.2L182.6,88.6L183.4,89.9L183.2,92.3L182.2,92.9L181.4,92.3ZM202.9,98.9L204.3,98.8L206.9,99.3L206.8,99.8L204.6,99.8L202.9,99.5ZM239.6,170.2L241.0,174.6L239.9,177.5L236.3,189.7L232.1,189.7L231.4,185.1L232.8,182.0L232.1,177.5L234.9,175.8L237.8,172.4ZM324.1,125.2L325.2,124.0L327.4,124.3L326.7,125.9L325.2,126.7ZM340.5,119.4L341.6,116.3L342.9,116.3L341.6,120.9ZM336.2,141.0L339.5,137.5L339.2,138.7L337.0,140.7Z" fill="#f4f4f4"/>
<path d="M236.3,80.0L237.8,78.5L239.2,77.9L242.0,77.3L244.9,77.9L245.2,80.6L243.5,80.6L242.3,82.0L241.0,82.6L242.3,84.7L244.2,85.9L244.2,87.8L246.3,89.3L244.9,90.8L245.3,92.7L246.3,95.8L243.5,96.6L241.0,95.8L239.2,95.2L239.0,93.6L239.9,90.3L239.6,88.6L238.2,87.1L237.1,85.1L236.8,82.8L235.9,81.6Z" fill="#c9c9c9"/>
<text x="195.0" y="76.3" font-size="9" font-style="italic" fill="#7a7a7a" text-anchor="middle" >EUROPE</text>
<path d="M-31.0,45.7L-31.9,42.7L-31.7,40.3L-34.3,40.2L-37.2,40.4L-38.1,37.0L-36.6,33.3L-39.2,33.8L-42.4,31.2L-40.1,25.2L-35.6,25.8L-33.2,27.3L-30.3,27.3L-28.9,21.0L-24.4,19.7L-28.9,18.6L-31.0,13.2L-30.9,12.2L-30.5,11.1L-29.4,11.7L-28.8,11.1L-28.2,10.9L-28.0,11.4L-27.8,11.9L-26.9,12.1L-26.4,12.1L-26.1,12.1L-25.2,12.3L-25.3,13.1L-25.9,13.4L-25.8,14.1L-26.1,15.2L-25.3,15.6L-24.6,15.5L-24.6,14.9L-23.9,14.8L-23.8,14.2L-23.4,14.0L-23.6,13.6L-23.1,13.2L-22.3,13.3L-22.1,13.8L-21.7,14.1L-21.1,13.6L-20.6,13.3L-20.0,13.6L-19.5,13.3L-19.5,12.9L-18.9,12.7L-18.2,12.5L-17.5,12.7L-17.0,12.4L-16.8,11.6L-16.4,11.4L-15.7,11.2L-15.4,10.5L-15.0,10.4L-14.6,10.2L-14.4,10.5L-13.8,10.3L-13.5,9.8L-13.0,10.0L-12.5,9.5L-12.6,8.6L-12.1,8.1L-11.5,7.9L-10.9,8.5L-10.6,8.9L-10.2,9.1L-9.7,9.2L-9.8,9.9L-9.8,10.4L-9.7,10.9L-9.9,11.8L-10.8,12.2L-10.1,12.4L-10.2,13.0L-10.0,13.3L-9.7,13.6L-9.7,14.2L-9.5,14.5L-8.9,14.3L-8.4,14.2L-7.7,14.2L-7.7,13.6L-7.8,13.2L-7.5,12.6L-7.0,12.4L-7.1,12.0L-6.9,11.6L-6.5,11.3L-6.0,11.6L-5.5,11.8L-5.2,11.7L-5.4,11.2L-4.9,10.9L-4.3,10.8L-3.9,10.3L-3.2,10.6L-3.2,11.3L-3.9,11.7L-3.6,12.9L-2.6,12.8L-1.8,12.8L-1.7,13.8L-1.1,13.7L-0.5,13.9L0.6,14.2L0.7,15.2L-0.6,15.8L-0.8,16.9L-0.9,16.1L-0.3,15.5L-0.0,14.8L0.4,14.6L1.2,15.4L0.9,16.2L2.0,16.5L3.1,15.6L3.8,16.0L4.4,15.6L3.8,15.8L4.0,16.5L4.8,16.6L5.0,17.4L5.0,17.9L5.6,18.1L6.0,18.7L6.1,19.1L5.9,19.5L6.6,19.8L6.9,19.2L6.8,18.7L6.3,18.7L6.4,18.3L6.8,17.8L7.2,17.5L7.7,17.7L8.1,17.8L8.1,18.4L8.4,17.8L8.8,18.3L9.5,17.8L9.8,17.3L10.4,17.6L10.9,17.8L11.4,18.3L12.0,18.4L12.2,18.1L12.8,18.4L12.8,19.1L13.4,19.1L13.3,19.7L13.1,19.9L13.5,20.4L14.2,20.0L14.7,20.8L14.1,21.3L14.0,20.8L14.1,20.4L14.6,20.2L15.2,20.4L15.1,21.2L15.2,21.8L15.2,22.4L15.7,22.8L15.2,23.2L15.8,23.4L15.7,23.9L15.4,24.5L15.0,24.8L15.5,25.2L16.0,24.9L16.3,25.3L16.6,25.8L16.7,25.2L17.2,24.8L16.4,24.7L16.3,24.2L17.0,24.3L17.3,23.6L17.8,23.0L18.3,23.1L18.8,23.0L18.8,22.4L18.2,22.0L17.8,21.6L17.6,21.2L17.3,20.3L17.0,19.8L17.5,19.8L17.6,19.2L18.0,19.4L18.7,19.1L18.6,18.5L19.3,18.2L19.4,18.7L20.2,18.8L20.7,19.0L21.2,19.6L21.8,19.2L22.1,19.6L22.4,19.1L22.0,18.5L22.2,17.6L23.0,17.7L23.5,17.9L23.3,18.5L23.6,19.1L23.4,19.5L23.8,19.8L24.4,20.3L25.0,20.2L24.9,19.5L25.6,19.3L26.0,19.0L25.5,19.4L25.7,19.9L26.3,19.8L26.7,20.3L27.3,20.2L27.6,20.0L28.0,20.4L28.7,20.3L28.9,19.9L29.5,19.5L29.4,19.0L29.3,18.5L29.3,18.2L29.3,17.7L29.5,17.3L30.1,17.2L30.3,17.6L30.3,18.3L30.6,17.8L31.3,18.2L31.9,18.3L32.1,19.0L32.6,18.9L33.0,18.8L32.8,19.4L33.0,19.9L33.2,20.4L33.6,20.4L33.3,21.1L33.3,21.7L33.0,22.1L32.3,22.0L32.0,21.2L32.3,21.0L32.4,20.4L33.1,20.4L33.6,20.2L33.7,19.5L34.3,19.6L34.2,19.2L33.6,19.0L33.7,18.7L33.8,18.2L33.7,17.6L34.3,17.6L34.5,17.2L34.7,16.8L34.9,16.1L35.7,16.0L35.6,15.4L35.3,15.1L35.3,14.5L35.9,14.1L35.8,13.6L36.6,13.4L37.4,13.3L36.9,12.3L37.4,11.7L37.3,11.0L36.8,10.7L36.4,10.3L35.9,10.5L35.6,11.1L35.0,11.3L34.4,11.0L33.9,10.2L33.4,10.1L33.0,9.5L32.8,8.8L32.2,9.1L31.9,8.7L32.2,8.4L32.2,7.8L31.8,7.5L32.0,7.0L32.1,6.4L31.9,6.0L32.0,5.6L32.0,5.0L32.4,5.5L33.0,5.1L33.7,5.4L33.9,4.8L34.2,4.1L33.9,3.4L33.5,2.8L34.0,2.4L34.5,2.8L35.1,2.8L35.5,3.3L35.0,3.9L34.7,4.0L34.2,4.3L34.8,4.6L34.9,5.1L35.0,5.5L35.6,5.9L35.5,6.6L35.9,7.0L36.1,7.8L36.8,7.7L37.2,7.3L37.3,7.9L37.1,8.5L37.4,8.9L37.8,9.0L37.6,9.6L38.0,9.9L38.4,10.5L39.0,11.0L38.7,11.6L38.3,12.1L38.6,12.3L38.7,12.9L39.0,13.5L38.8,14.0L39.2,13.5L39.7,13.6L40.1,14.0L40.1,14.4L40.6,14.7L40.7,15.2L40.7,15.6L40.7,16.4L40.4,16.9L40.5,17.3L41.1,17.3L41.5,17.6L42.1,17.3L42.7,17.1L43.3,17.1L43.5,17.8L44.1,17.9L44.5,18.4L44.3,18.8L44.9,18.1L45.6,18.3L45.2,18.0L45.3,17.4L45.1,17.0L44.8,16.4L45.4,16.0L45.2,15.5L44.6,15.2L44.3,14.4L44.5,14.9L45.1,14.8L45.3,14.3L45.7,13.9L45.9,13.7L46.1,13.2L46.5,13.1L47.0,12.9L47.4,12.3L47.9,12.4L47.7,13.0L48.3,13.2L48.6,13.8L48.0,14.2L47.4,14.0L47.0,14.3L46.9,14.7L46.9,15.4L47.6,15.2L47.8,15.6L48.6,15.6L49.3,15.8L49.8,15.3L49.6,16.1L50.2,16.4L50.5,15.9L50.6,15.4L51.2,15.0L51.3,14.5L51.9,14.4L52.5,14.6L52.8,14.6L52.5,13.9L52.6,13.2L52.9,12.8L52.7,13.3L53.1,13.6L52.7,14.1L52.9,14.4L53.5,14.5L53.9,14.8L54.2,15.0L53.9,15.6L53.3,15.6L53.0,15.9L52.6,16.1L52.5,16.6L52.0,16.6L52.3,16.9L52.5,17.3L52.7,18.0L52.9,18.4L52.9,18.9L52.7,19.5L53.1,18.9L53.5,19.1L53.7,19.6L54.1,20.0L54.1,20.6L53.9,21.4L53.5,21.2L53.2,20.8L53.0,21.3L52.1,21.3L51.7,21.4L51.2,21.8L51.8,22.3L51.7,22.9L51.7,23.3L51.2,23.7L50.6,24.2L50.0,23.9L50.7,23.9L51.0,24.6L50.8,25.3L50.7,25.8L50.2,25.7L49.7,25.6L49.3,25.8L48.9,25.3L48.7,25.7L48.5,26.2L48.1,25.7L48.5,25.3L47.9,25.0L47.8,25.5L48.1,26.0L48.6,25.8L49.0,26.0L48.5,26.3L48.7,27.0L48.6,27.5L48.2,27.7L47.7,28.1L47.4,27.7L47.1,27.3L46.1,27.7L46.4,28.5L46.4,29.0L45.8,29.2L45.1,29.5L44.5,29.6L44.1,29.9L44.6,30.2L44.6,30.7L44.0,30.6L43.7,31.4L43.6,31.9L44.1,32.1L43.6,32.6L43.4,33.0L43.1,33.5L42.6,33.4L42.2,33.1L41.8,33.1L41.5,33.5L41.0,33.6L40.2,33.8L40.5,34.4L40.4,35.0L40.1,35.2L40.1,35.7L39.7,36.0L39.5,36.7L39.0,36.7L38.8,37.2L38.1,37.4L38.5,38.1L38.5,38.7L37.9,38.9L37.7,38.8L37.2,38.7L36.5,38.9L36.7,39.5L36.3,39.9L35.8,39.7L35.6,40.0L35.3,40.5L36.0,40.9L36.4,41.3L36.1,41.9L35.9,42.3L35.7,42.7L35.2,42.8L34.7,42.4L34.4,42.9L34.9,43.3L34.5,43.4L34.0,43.7L34.3,44.0L34.3,44.7L34.2,45.4L34.8,45.7L34.4,46.4L34.1,46.5L33.9,47.1L33.6,47.5L33.7,48.1L34.0,48.8L34.8,49.0L35.3,49.3L35.7,49.5L36.1,49.7L36.6,49.3L37.2,49.6L37.6,50.2L37.8,50.6L38.1,51.1L37.5,51.8L37.8,52.7L37.5,53.4L37.9,53.9L38.5,53.8L38.8,53.8L39.3,53.3L40.3,53.2L40.5,53.7L40.9,53.8L41.5,53.9L42.0,54.4L42.2,54.9L42.7,54.9L43.1,54.8L43.7,55.0L43.9,55.4L44.3,55.7L45.0,55.9L45.1,56.8L45.6,56.8L46.4,56.8L47.0,57.3L47.1,57.9L47.8,58.1L48.6,57.9L49.0,58.2L49.4,58.5L50.0,58.9L50.7,59.0L51.3,59.2L51.7,59.0L52.2,58.4L52.8,58.9L53.0,59.5L53.0,60.0L53.2,60.4L53.0,61.8L53.4,62.5L52.9,63.1L52.6,63.8L52.8,64.4L53.6,64.5L53.8,65.1L54.3,65.7L54.4,66.0L54.3,66.6L54.3,67.0L54.5,67.5L55.0,67.9L55.4,68.0L55.9,67.5L56.0,67.1L56.7,67.1L57.1,67.0L57.5,66.8L57.6,66.3L58.1,66.0L58.2,65.4L58.2,64.6L57.7,64.4L57.5,63.8L57.1,63.3L56.9,63.0L57.0,62.5L57.1,62.0L57.2,61.5L57.2,61.1L56.7,60.8L56.4,59.9L57.1,59.5L57.5,59.4L58.0,59.1L58.4,58.7L58.8,58.7L59.1,58.0L59.3,57.4L59.5,56.8L59.8,56.5L60.1,56.2L60.0,55.5L60.3,55.1L60.4,54.4L60.6,54.0L60.8,53.5L60.7,52.7L60.2,52.4L60.0,52.0L59.6,51.7L59.4,51.3L59.3,50.7L59.2,50.2L59.0,49.9L58.6,49.6L58.0,49.0L57.8,48.6L57.5,48.1L57.6,47.4L58.2,47.0L58.7,46.5L59.3,46.2L59.3,45.7L59.3,44.9L58.8,44.1L58.9,43.3L58.8,42.9L58.8,42.4L58.9,41.9L58.6,41.3L59.0,40.9L59.3,40.2L59.4,39.6L59.3,39.1L58.8,39.0L58.6,38.6L59.3,38.9L59.6,39.3L60.4,39.2L61.1,39.2L61.6,38.9L62.1,38.9L62.3,38.4L62.8,38.3L63.6,38.4L64.0,38.7L64.5,38.6L64.6,39.2L64.5,39.9L64.8,40.2L65.2,40.5L65.5,40.7L66.0,40.9L66.8,41.3L67.4,41.3L67.8,42.0L68.1,42.3L68.8,42.4L69.1,42.0L69.5,42.4L69.9,42.8L69.5,43.2L69.6,43.6L69.8,44.2L70.0,44.8L70.4,45.2L70.6,45.8L70.7,46.3L70.2,46.6L69.7,46.9L69.5,47.6L69.6,48.0L69.7,48.5L69.9,49.0L70.6,49.2L71.1,49.5L71.2,49.9L71.7,50.0L72.1,50.4L72.3,50.1L72.3,49.6L73.0,49.2L73.5,49.2L74.1,48.9L74.6,49.1L74.9,49.0L75.0,48.4L75.5,48.2L75.7,47.6L75.9,47.0L76.1,46.6L76.3,46.3L76.8,45.8L77.2,45.9L77.2,45.3L77.2,44.9L77.6,44.5L77.4,45.0L77.5,45.4L77.7,45.9L78.0,46.4L78.5,46.6L78.9,46.7L78.7,47.3L79.2,47.9L79.4,48.5L79.8,48.9L80.3,49.1L80.7,49.3L81.2,50.2L81.0,50.9L81.1,51.5L81.3,52.0L81.4,52.7L82.0,53.1L82.3,53.8L82.2,54.4L82.5,54.8L82.3,55.4L82.6,55.7L82.7,56.4L83.1,56.5L83.6,56.6L83.8,57.5L83.9,58.1L84.6,58.1L84.9,58.4L85.4,59.0L85.8,59.4L85.8,60.0L86.3,60.0L86.8,59.9L87.3,60.3L87.7,60.7L88.4,60.6L89.1,60.9L89.5,61.2L89.6,61.9L89.6,62.3L89.7,62.8L89.9,63.3L90.3,63.9L90.6,64.5L90.3,64.9L90.3,65.5L90.3,66.1L89.9,66.2L89.4,65.8L88.9,66.2L88.4,66.7L88.4,67.3L87.8,67.4L87.2,67.3L86.9,67.7L86.4,68.0L85.9,68.4L85.6,68.9L85.6,69.6L85.0,70.1L84.6,69.9L84.2,70.0L83.6,69.9L83.2,70.1L82.5,70.2L81.8,70.0L81.3,70.0L80.6,70.2L80.2,70.1L79.5,70.0L79.0,69.9L78.5,70.0L78.0,70.1L77.6,69.9L77.0,70.3L76.7,70.6L75.9,70.7L75.3,70.6L74.9,70.2L74.9,70.8L74.3,71.2L73.7,71.4L73.5,72.2L72.9,72.7L72.7,73.1L72.6,73.5L72.4,74.0L72.1,74.1L71.4,74.1L71.8,74.6L71.6,75.0L71.2,75.6L70.6,75.6L70.3,75.9L69.7,76.1L69.2,76.7L68.8,77.0L68.5,77.0L68.2,77.5L68.6,77.6L69.1,77.6L69.5,77.1L69.9,77.1L70.3,76.5L70.6,76.0L71.0,76.2L71.4,76.0L71.5,75.5L71.9,75.2L72.1,74.7L72.1,74.3L72.3,73.4L72.8,73.0L73.1,72.6L73.5,72.5L73.8,72.5L74.4,72.7L74.9,72.6L75.2,72.1L75.8,72.0L76.6,72.0L77.3,72.2L77.6,72.4L77.8,72.9L78.1,73.5L77.7,74.0L77.2,74.5L76.7,74.8L76.3,75.0L77.1,75.0L77.4,75.6L77.3,75.9L77.3,76.5L77.4,77.2L77.2,77.7L77.1,78.0L76.6,78.3L77.1,78.2L77.6,78.2L78.1,78.7L78.7,79.0L79.1,79.6L79.9,79.6L80.5,79.9L81.0,79.8L81.6,79.8L81.9,80.3L82.4,80.5L82.7,80.4L82.6,79.8L82.8,79.3L83.3,78.9L83.7,78.7L83.6,78.2L83.6,77.9L83.5,77.1L84.0,77.5L84.4,77.9L84.5,78.6L84.5,79.2L84.0,79.3L83.7,79.7L83.2,80.1L82.7,80.8L82.4,81.3L81.9,81.7L81.3,81.7L80.6,81.8L80.2,81.9L79.8,81.8L79.4,81.8L79.0,82.2L78.5,82.4L78.3,82.8L78.0,83.2L77.6,83.8L77.1,84.0L76.3,83.9L75.8,83.8L75.5,83.6L75.4,82.9L75.6,82.4L75.9,82.2L75.8,81.6L76.0,81.3L76.4,81.0L76.7,80.7L77.1,80.5L77.8,80.6L77.3,80.2L76.5,80.4L76.0,80.5L75.6,80.8L75.2,81.0L74.9,81.3L74.2,81.0L74.2,81.0L73.1,79.8L73.1,77.1L71.1,76.2L69.9,78.1L69.2,80.2L67.8,81.2L63.3,81.2L60.8,82.8L57.1,84.4L57.1,85.5L52.2,87.3L51.5,86.7L52.3,85.1L52.2,80.6L50.7,79.6L50.0,78.5L48.9,77.5L43.9,74.3L42.2,75.0L37.2,73.7L34.7,72.2L34.1,72.8L-5.4,72.8L-8.3,70.6L-12.5,67.3L-16.1,60.2L-19.7,53.9ZM85.2,75.6L85.7,75.7L86.4,76.0L86.9,75.8L87.7,75.8L88.6,75.7L89.2,76.2L89.9,76.6L89.9,77.3L90.3,77.0L90.8,77.0L91.3,76.7L91.6,77.0L91.8,77.4L92.4,77.6L93.0,77.7L93.2,77.2L93.9,77.1L94.3,76.9L94.4,76.5L94.6,75.7L94.5,75.3L94.2,74.9L94.1,74.3L93.6,74.0L93.3,73.5L93.0,73.3L93.4,72.7L93.2,72.4L93.1,71.7L92.8,71.4L92.3,71.0L91.3,71.1L90.6,71.1L90.9,70.7L90.8,69.8L90.5,68.8L90.1,67.7L89.4,67.9L89.1,68.0L88.6,68.0L88.4,68.6L88.7,69.2L88.3,69.4L87.9,69.8L87.5,69.9L87.1,70.3L87.2,70.8L87.0,71.7L86.9,72.3L86.9,73.0L86.6,73.3L85.9,73.7L85.6,74.3L84.9,74.7L84.8,75.2ZM78.1,77.5L81.3,78.3L80.3,79.2L78.5,78.5ZM77.8,70.9L81.3,72.2L79.2,72.2ZM82.0,24.3L81.5,24.3L81.0,24.5L80.2,25.2L80.1,25.9L79.8,26.5L79.4,27.1L78.9,27.1L78.8,27.7L78.5,28.3L78.7,28.9L79.5,28.9L79.8,29.4L80.2,29.6L79.9,30.2L79.6,31.0L80.2,31.5L80.7,31.8L81.4,31.4L80.9,31.7L81.0,32.2L81.0,33.0L80.4,33.2L80.2,34.0L79.5,34.0L79.7,34.3L79.9,35.0L79.2,34.9L79.1,35.5L78.5,35.5L78.1,35.9L77.5,35.6L77.7,36.3L77.1,36.4L77.6,36.9L77.4,37.6L77.8,37.4L78.1,37.9L77.8,38.4L76.9,38.2L76.7,38.7L76.3,39.2L76.1,39.1L75.6,39.0L75.4,39.4L74.9,39.5L74.8,39.0L75.1,38.7L74.6,38.8L74.3,38.4L73.6,38.5L73.2,38.1L72.8,38.3L72.4,37.6L72.1,37.4L71.5,37.5L71.0,37.8L70.7,37.7L70.0,38.0L69.3,37.7L69.4,37.3L69.3,36.9L68.8,36.5L68.4,36.1L68.1,36.1L68.2,35.5L67.8,35.2L67.6,34.6L67.7,34.2L67.7,33.5L67.1,33.5L66.3,33.3L66.0,33.0L65.6,32.9L65.0,33.1L64.7,33.0L64.3,32.6L63.8,32.3L63.5,32.9L63.0,32.6L62.6,33.2L62.3,32.7L62.2,32.3L61.8,32.8L61.4,32.6L61.1,33.3L60.6,33.2L60.2,32.8L59.7,32.9L59.4,32.5L59.2,31.9L59.9,31.5L59.8,32.1L59.3,32.1L58.8,32.0L58.6,31.6L59.0,31.0L58.8,30.7L58.6,30.0L59.0,29.9L59.3,29.2L59.3,29.9L58.7,30.0L59.2,30.2L59.7,30.7L60.1,30.8L60.5,30.8L61.0,30.7L61.4,30.5L62.2,30.3L62.1,29.3L62.1,28.6L62.3,28.0L62.8,28.0L63.4,27.8L63.6,28.2L64.3,28.5L65.0,28.7L65.0,28.1L65.3,27.8L64.9,27.3L64.5,27.0L64.5,26.4L64.6,25.7L65.0,25.0L65.2,24.3L65.2,23.8L64.9,23.2L64.4,23.2L64.4,22.7L64.5,22.4L64.9,22.5L65.3,22.3L65.9,21.8L66.4,21.4L65.8,21.4L65.5,21.4L65.6,20.8L65.1,20.6L64.3,20.6L64.5,20.2L64.2,19.8L63.9,19.5L63.5,19.4L63.5,18.8L63.1,18.6L62.5,18.7L62.2,19.4L61.7,19.5L61.5,19.0L61.3,18.5L61.3,19.0L60.7,19.1L60.5,18.7L60.0,18.8L60.6,18.4L60.4,17.7L60.8,17.2L61.2,17.4L61.4,16.9L61.2,16.4L61.7,16.1L62.3,16.2L62.7,15.7L62.2,15.3L62.1,14.8L61.4,14.9L61.2,14.2L61.0,13.6L61.6,13.5L61.9,13.2L61.6,12.6L61.1,12.8L61.0,12.3L61.2,11.8L61.5,11.1L60.8,10.7L60.4,11.0L60.0,10.6L59.0,11.0L58.5,10.1L58.0,10.7L57.9,11.6L57.3,12.1L56.8,12.6L56.9,13.3L56.6,13.7L56.2,13.8L56.4,14.4L56.5,13.9L56.4,13.4L55.7,13.2L55.9,12.6L55.5,12.3L55.3,11.6L54.6,11.4L54.3,11.8L53.6,11.6L53.8,10.8L53.7,10.1L53.5,9.7L52.4,9.7L52.1,10.4L51.9,9.8L51.1,9.6L50.6,10.1L51.1,10.6L50.6,10.9L50.1,10.9L49.5,11.1L49.3,11.6L48.6,11.6L48.1,11.5L48.4,11.0L47.7,10.7L47.3,10.5L46.9,10.9L46.5,10.3L45.8,9.9L45.6,10.5L44.8,10.4L44.4,9.8L43.8,10.1L43.6,9.5L43.2,10.0L42.7,10.3L42.4,9.8L42.5,9.2L42.0,8.9L41.8,8.4L41.8,7.9L42.2,7.3L42.3,6.6L41.6,6.2L42.0,5.6L42.4,5.1L42.1,4.6L41.9,3.8L41.2,3.6L41.8,3.2L41.9,2.8L41.9,2.3L42.6,2.3L43.2,2.4L43.6,2.2L43.9,1.9L44.2,1.0L43.3,0.6L43.6,-0.1L44.4,-0.2L43.1,-0.6L43.2,-1.6L42.7,-1.6L42.3,-2.3L42.6,-3.0L42.9,-3.4L43.0,-4.0L42.5,-4.6L42.9,-4.9L43.4,-5.0L43.9,-5.2L44.1,-5.8L44.6,-6.0L45.1,-5.9L45.7,-6.3L45.5,-7.2L45.6,-6.6L45.8,-6.0L46.3,-5.3L47.2,-5.9L47.6,-5.4L48.2,-5.7L49.1,-5.9L49.6,-6.5L49.6,-7.2L50.0,-7.9L49.9,-7.5L50.4,-7.2L51.5,-6.9L51.4,-6.0L51.9,-6.1L52.4,-6.5L52.8,-6.3L52.9,-5.9L53.7,-6.1L53.9,-5.6L53.8,-5.0L53.6,-4.5L53.0,-4.7L52.3,-4.5L52.0,-4.0L52.3,-3.4L52.9,-4.1L53.5,-3.6L53.9,-3.6L54.4,-3.6L54.8,-3.3L55.3,-3.2L55.7,-2.6L55.0,-1.9L55.5,-2.2L55.9,-1.9L56.2,-2.6L56.6,-2.6L57.2,-2.5L57.5,-3.1L57.9,-3.0L58.3,-3.1L58.6,-2.8L58.9,-2.5L58.6,-2.0L59.0,-1.6L58.5,-1.4L58.6,-0.9L59.1,-0.8L59.3,-1.3L59.8,-1.0L60.2,-1.1L60.5,-1.4L60.5,-2.0L60.8,-1.4L61.2,-1.5L61.6,-1.2L61.4,-0.4L61.4,0.1L61.6,0.5L62.1,1.0L61.7,1.5L61.2,1.9L60.7,1.6L61.2,2.0L61.5,2.2L61.8,2.1L62.4,2.1L62.5,2.6L62.8,2.8L63.1,2.5L63.1,2.0L63.6,1.9L64.2,2.3L65.0,2.4L65.4,2.7L65.6,3.2L66.2,3.4L66.1,4.1L65.9,4.6L66.5,4.9L67.1,5.1L67.5,5.4L68.0,5.4L68.1,6.0L68.3,6.4L68.5,6.7L68.5,7.3L69.2,7.5L69.5,7.9L69.7,8.2L69.9,8.9L69.2,9.1L68.9,9.4L69.3,9.9L69.6,10.3L69.7,11.0L70.4,10.7L71.1,10.8L71.5,10.1L72.1,10.3L72.8,10.7L72.9,11.2L73.2,11.7L73.4,12.4L73.8,12.9L73.8,13.6L73.9,13.9L74.2,14.4L73.9,15.1L73.3,14.8L72.8,15.0L72.9,15.4L72.6,16.0L72.9,16.5L73.3,16.5L73.1,16.8L72.5,16.9L72.4,17.4L72.1,17.6L72.8,17.6L73.1,17.6L73.6,17.9L74.3,17.7L74.7,17.4L75.3,17.6L75.4,18.1L75.6,18.8L75.5,19.4L74.7,19.5L73.8,19.8L74.2,20.9L74.7,21.3L74.7,21.8L75.7,21.6L76.0,22.3L76.6,22.1L77.0,22.7L77.5,22.5L78.0,22.1L78.5,22.5L79.2,22.2L79.7,22.7L80.1,23.0L80.4,23.2L79.9,23.7L79.8,24.0L80.5,24.1L80.7,23.6L81.3,23.2L81.3,24.0ZM55.3,34.5L54.4,34.5L53.8,34.7L53.3,35.4L52.2,35.2L51.2,36.1L50.0,35.8L49.5,36.1L48.6,36.1L48.1,35.9L47.2,35.3L46.6,34.8L45.8,34.8L46.2,34.0L46.4,33.0L47.0,31.7L47.2,30.2L47.4,29.5L48.1,28.9L48.4,28.0L47.9,27.5L48.4,27.3L48.6,27.0L49.2,26.7L50.0,26.8L50.2,27.4L49.8,28.0L50.4,28.8L50.7,29.6L52.1,29.7L53.0,30.1L53.0,31.4L53.6,31.9L54.1,32.6L54.0,34.1L54.8,34.3ZM51.5,37.4L52.5,38.4L53.6,38.9L55.1,39.0L56.0,38.3L54.9,37.0L53.6,36.7L52.8,37.0ZM55.0,39.8L56.4,40.7L56.4,38.6ZM2.4,10.7L1.7,11.1L1.8,11.9L1.5,12.5L1.3,13.0L1.6,13.9L2.5,13.7L1.7,14.5L2.2,15.1L2.7,14.9L3.5,15.1L4.2,14.1L5.5,14.3L6.3,13.7L6.9,14.3L7.1,15.2L7.4,15.6L7.1,16.4L7.3,16.7L7.8,16.8L8.1,17.3L8.3,17.6L8.8,17.4L9.5,17.6L9.8,17.2L10.4,17.4L10.3,16.9L10.4,16.5L11.0,16.4L11.3,16.2L10.9,17.2L11.6,17.6L11.9,18.4L12.6,18.2L12.7,17.4L13.1,16.8L13.9,17.1L14.5,17.2L14.9,17.0L15.1,16.6L15.3,16.0L16.0,16.0L16.7,16.2L16.8,15.6L16.9,15.2L17.5,15.0L17.9,14.9L18.4,15.2L18.7,15.3L18.7,16.0L19.2,16.1L19.7,16.2L20.3,16.4L20.7,16.3L20.7,16.7L21.1,17.2L21.6,17.0L21.9,17.2L22.3,16.8L22.7,16.9L23.2,17.0L23.3,16.3L23.2,15.8L23.7,15.3L24.3,14.8L23.9,14.2L24.3,14.7L24.7,14.5L24.6,13.9L25.1,13.6L25.0,12.9L25.4,12.3L25.7,11.8L25.4,11.1L24.7,11.3L24.2,11.5L23.9,10.9L23.7,10.3L23.0,10.1L22.8,10.7L22.4,10.8L22.5,10.2L21.9,10.0L21.4,10.0L21.1,10.5L20.8,9.9L20.9,9.5L20.4,9.3L19.8,9.3L19.9,8.5L19.6,8.1L20.2,7.3L21.0,7.6L20.8,7.0L21.3,6.7L21.2,6.2L20.8,5.6L20.8,5.1L20.2,5.1L20.6,5.0L20.9,4.7L21.5,4.3L21.9,4.6L21.7,3.7L22.3,3.5L22.7,2.9L22.6,2.3L21.6,2.8L21.0,2.7L20.4,2.1L20.0,2.0L20.0,1.3L20.7,1.0L20.2,0.3L20.2,-0.9L19.7,-0.6L19.0,-0.5L18.7,-0.9L18.1,-0.7L17.7,-1.0L17.6,-1.5L17.5,-1.9L17.5,-2.3L17.3,-2.9L16.9,-3.5L16.4,-3.2L16.0,-3.1L15.5,-2.9L15.2,-3.4L15.1,-3.8L14.5,-4.1L14.2,-3.4L13.8,-3.2L14.1,-3.0L14.1,-2.5L14.1,-1.9L13.9,-1.3L13.5,-1.0L13.1,-0.9L12.5,-0.9L12.1,-0.8L11.6,-1.0L11.4,-1.3L10.8,-1.1L10.6,-0.6L10.8,0.1L10.4,-0.4L9.9,-0.4L9.3,-0.2L8.8,-0.4L8.8,-1.1L8.2,-1.2L7.8,-1.7L7.9,-2.1L7.2,-2.3L6.9,-2.8L6.4,-3.1L6.2,-3.4L5.8,-2.8L5.5,-2.4L4.9,-2.5L4.5,-2.9L4.0,-3.4L3.3,-3.0L2.8,-3.2L2.4,-2.9L2.4,-2.2L2.2,-1.9L2.2,-1.4L2.4,-0.8L2.5,-0.2L2.0,-0.3L1.5,-0.3L1.0,0.0L1.6,-0.2L2.0,0.2L1.6,0.7L1.9,1.4L1.1,1.2L0.3,2.1L0.7,2.8L0.4,3.3L0.8,3.7L0.8,4.1L0.7,4.9L1.2,5.6L0.8,6.1L1.3,5.8L1.7,6.4L2.3,6.4L2.7,6.2L3.1,6.1L3.5,6.4L3.6,6.0L3.9,5.6L4.5,6.0L4.4,5.1L4.9,4.7L5.5,5.4L6.3,4.8L6.8,5.1L7.2,5.0L7.7,5.5L8.5,5.8L9.2,5.7L9.0,6.6L10.2,7.4L9.6,7.7L9.7,8.5L8.9,8.6L8.8,9.5L8.0,9.1L7.6,10.2L7.3,9.8L6.8,9.3L6.7,9.9L6.1,10.3L5.6,10.1L5.0,10.5L4.5,10.7L4.6,10.0L4.2,10.3L3.7,9.8L3.3,10.3L3.4,10.8L2.8,10.7ZM-9.0,2.8L-8.4,3.4L-8.5,4.3L-7.8,4.5L-7.8,5.5L-7.3,5.5L-6.7,5.3L-6.4,5.9L-5.4,6.4L-4.8,6.8L-4.5,7.5L-3.5,7.1L-2.9,6.9L-2.9,6.3L-2.8,5.6L-2.4,5.0L-1.9,5.1L-2.1,2.7L-0.4,2.2L1.1,2.8L2.1,2.1L1.9,1.0L0.3,0.3L0.8,-0.7L1.0,-1.9L1.2,-2.3L1.8,-2.1L2.4,-2.5L2.1,-3.4L2.6,-4.0L2.6,-5.0L4.1,-4.8L4.5,-5.9L4.2,-6.8L4.4,-8.0L3.9,-8.5L3.2,-8.5L3.2,-9.0L2.9,-9.5L2.2,-9.9L1.7,-9.5L0.2,-10.2L-1.3,-8.5L-1.8,-7.4L-3.3,-6.2L-2.9,-7.6L-4.0,-8.4L-5.3,-9.4L-6.9,-8.5L-7.1,-6.3L-8.4,-4.7L-6.6,-4.4L-5.6,-2.5L-5.0,-0.7L-6.8,1.4L-8.6,1.3ZM28.0,15.6L28.6,15.8L28.9,16.3L29.3,16.6L29.7,17.2L30.3,17.4L30.8,17.2L30.8,16.5L31.4,15.9L32.0,16.6L32.6,16.1L33.1,16.4L33.5,16.3L33.7,15.6L33.4,15.2L33.6,14.7L33.2,14.5L33.2,13.9L32.6,13.9L32.2,13.7L32.1,12.9L32.3,12.4L31.6,12.8L31.1,12.2L30.5,12.2L30.4,12.5L29.9,12.6L29.4,12.0L29.1,12.4L28.8,12.6L28.2,13.4L27.7,13.6L27.4,13.9L27.2,14.7L27.9,15.1ZM24.4,2.8L24.7,3.8L25.6,3.8L26.1,4.4L26.6,5.3L27.7,5.3L27.9,6.1L28.7,6.0L28.2,4.6L29.1,4.1L29.8,3.5L30.9,3.8L32.1,2.9L32.9,2.5L32.1,1.6L32.3,0.5L31.4,-0.5L31.1,-1.8L30.1,-2.2L28.7,-2.3L29.7,-4.0L28.3,-5.2L30.0,-4.5L30.8,-5.9L30.9,-7.0L30.0,-7.0L29.3,-7.0L29.1,-7.6L27.6,-6.5L28.4,-5.3L26.9,-5.8L25.9,-5.9L27.2,-4.8L27.0,-3.4L27.2,-2.4L27.6,-1.8L26.7,0.4L24.0,-0.3L22.7,1.8ZM33.7,1.9L33.7,2.4L34.1,2.7L34.2,3.3L34.4,3.6L35.0,3.3L35.5,4.0L36.2,3.3L36.5,2.8L37.2,2.8L37.3,2.0L38.1,2.5L38.9,2.3L38.6,1.3L38.9,0.7L40.4,0.7L40.8,-0.9L41.2,-1.6L40.8,-2.6L40.2,-3.1L39.0,-3.0L39.4,-4.7L38.0,-5.2L39.3,-6.2L40.1,-6.9L38.7,-6.5L37.7,-8.0L37.0,-6.6L36.4,-5.2L36.5,-5.8L35.8,-6.1L35.3,-6.8L34.4,-6.9L34.6,-5.8L33.6,-4.7L34.3,-3.9L34.4,-2.1L34.0,-1.3L33.3,-0.4L32.7,0.8ZM55.0,-4.4L55.8,-2.9L56.5,-2.3L58.0,-2.2L58.6,-1.4L59.5,-1.4L60.4,-0.9L60.9,-1.4L61.4,-1.9L60.7,-2.8L60.8,-4.9L60.1,-5.9L58.6,-5.9L58.0,-5.3L57.3,-5.3L56.2,-4.2ZM59.7,22.1L62.4,21.4L62.1,18.4L60.0,19.1ZM62.8,21.4L64.5,20.7L63.8,19.5ZM55.7,56.4L57.1,54.9L56.7,56.9ZM52.9,63.8L54.6,63.3L54.3,64.5ZM58.1,36.1L59.6,35.5L58.9,36.7ZM75.9,41.0L77.6,40.7L77.1,41.9ZM72.1,44.3L73.2,44.0L72.8,45.1ZM18.0,-3.4L20.9,-2.9L19.5,-5.9ZM23.7,16.8L25.4,16.0L24.4,15.6ZM52.9,14.0L55.0,12.8L56.4,14.0L54.3,14.9ZM56.4,16.0L58.1,14.9L57.9,17.2ZM58.6,15.2L60.4,14.4L60.0,16.0ZM3.0,104.1L4.9,104.3L6.2,104.1L9.0,104.8L11.6,106.1L13.0,106.2L15.6,106.1L15.7,105.7L15.6,105.3L16.7,105.4L18.0,105.3L18.8,106.2L20.2,107.1L20.6,108.1L20.9,108.9L21.8,109.5L22.7,109.9L23.0,109.4L23.4,108.7L24.4,108.5L25.1,108.6L25.8,109.4L26.3,109.9L27.3,111.2L27.8,112.1L28.0,112.9L28.7,114.0L30.2,114.4L31.3,114.7L31.2,115.6L30.5,117.0L30.6,118.7L30.4,120.1L30.8,121.6L31.1,122.4L31.5,123.2L32.3,124.3L32.5,124.9L33.0,125.5L33.9,125.8L34.4,126.1L34.9,126.4L35.4,126.7L36.5,126.6L37.2,126.2L37.8,126.1L38.9,126.1L39.6,125.4L40.4,125.0L40.4,123.8L40.9,122.7L41.7,122.3L42.2,122.0L43.1,121.9L44.3,121.5L45.1,121.5L45.9,121.8L46.0,122.4L45.9,123.0L45.4,123.6L44.9,124.6L45.0,125.6L44.6,126.4L43.9,126.2L43.4,126.9L42.8,127.1L41.5,126.9L40.1,127.3L40.1,127.7L40.1,128.2L40.4,128.6L40.8,129.2L40.1,129.2L39.1,129.8L38.9,130.6L38.4,132.0L37.0,130.9L36.1,129.9L35.0,129.9L34.4,129.6L32.9,129.9L32.3,130.4L31.1,129.8L30.1,129.6L29.0,129.0L27.6,128.8L25.9,127.8L24.7,127.1L23.6,126.6L22.3,126.4L21.1,125.8L20.2,124.7L19.6,124.0L19.3,123.4L19.6,122.5L19.7,121.5L19.1,120.9L18.7,119.7L18.2,118.9L17.3,117.8L16.4,117.1L15.5,115.9L14.8,115.2L13.9,114.7L13.8,114.1L13.8,113.4L12.8,112.6L12.2,112.1L11.5,111.3L10.5,110.2L9.8,109.5L9.4,108.6L8.9,107.5L8.5,106.3L7.1,105.8L6.2,105.3L6.1,106.4L6.4,107.3L7.4,108.4L7.9,109.2L8.6,110.4L9.1,111.5L9.6,112.3L10.2,113.3L10.6,114.4L11.2,115.0L11.8,115.7L12.1,116.9L13.0,117.6L13.6,118.8L13.4,119.0L13.1,119.5L12.6,119.0L11.8,118.3L11.1,117.3L9.9,116.6L9.7,115.4L9.9,114.7L9.2,113.9L7.7,113.3L6.8,112.5L6.1,111.8L6.7,111.3L7.1,110.8L6.4,110.0L5.7,109.1L5.2,108.4L4.5,107.3L4.2,106.6L3.5,105.6L3.1,104.8ZM38.4,132.0L39.1,129.8L40.8,129.2L40.1,128.2L40.1,127.3L42.8,127.1L43.9,126.2L44.3,127.7L43.5,129.9L44.1,130.4L42.6,131.4L42.4,132.3L41.4,133.2L39.7,132.9ZM58.1,126.5L59.7,126.2L61.1,127.0L60.0,127.3ZM73.9,126.4L76.1,126.4L75.9,127.0L74.1,127.0ZM96.3,146.9L96.7,147.8L96.4,148.6L97.0,148.8L97.3,149.4L97.5,149.7L98.0,149.9L98.0,150.4L98.4,150.7L98.1,151.3L97.9,152.0L98.0,152.6L98.2,153.0L98.8,153.2L99.2,153.3L99.8,153.3L100.1,153.8L100.8,154.1L101.3,154.5L101.6,154.4L102.3,154.1L102.7,154.0L103.3,154.5L103.9,154.5L104.1,154.9L104.8,155.0L105.2,155.5L105.4,155.9L105.9,156.2L106.2,156.4L106.9,156.5L107.4,156.6L107.9,156.4L108.4,156.7L109.3,156.6L109.8,156.8L110.1,157.1L111.1,156.9L111.6,157.4L112.2,157.1L112.6,157.1L113.5,157.4L114.0,157.6L114.6,157.8L114.7,158.3L114.7,158.7L115.2,159.2L115.9,159.6L116.6,159.8L117.2,159.6L118.1,160.1L118.7,160.0L119.2,160.4L119.5,161.1L119.9,161.3L119.7,162.4L119.9,163.0L120.3,163.7L120.0,164.6L120.1,165.4L119.6,165.9L118.9,166.6L118.2,167.2L118.1,167.8L117.6,168.2L117.3,168.4L116.9,168.8L116.6,169.2L116.2,169.9L115.8,170.2L115.0,170.3L114.8,170.8L114.6,171.6L114.7,172.5L114.2,173.3L114.1,173.7L114.0,174.3L113.9,175.4L113.7,176.1L114.0,176.6L114.0,177.5L113.5,177.9L112.8,178.6L112.9,179.3L113.0,179.8L113.3,180.5L113.3,181.7L113.1,183.3L112.6,185.1L105.5,182.6L99.2,187.9L93.3,185.4L87.3,185.1L86.9,184.1L86.4,183.5L86.7,182.6L87.0,182.0L87.6,181.1L87.2,180.2L87.3,179.7L87.3,179.0L87.0,178.6L87.3,178.0L87.2,177.4L86.6,176.5L86.1,176.5L85.4,176.9L84.8,176.8L83.9,176.4L83.6,175.7L82.9,174.6L82.9,173.4L83.5,172.7L83.3,172.1L82.7,171.9L82.1,172.0L81.3,171.9L80.6,171.7L80.1,171.9L80.0,171.5L79.6,171.1L79.2,171.4L78.4,171.3L77.8,171.0L77.8,170.6L77.5,170.0L77.0,169.7L76.6,169.8L76.7,168.9L76.3,168.3L76.3,167.6L76.6,167.0L76.3,167.2L75.8,167.2L75.3,167.0L74.9,167.2L73.9,167.3L73.3,166.9L72.7,168.1L71.8,168.7L71.2,168.7L70.8,168.9L69.7,168.6L69.1,168.7L69.3,168.0L69.0,167.5L69.2,167.2L69.2,166.6L68.5,166.9L67.1,166.9L66.8,166.5L66.0,166.4L66.1,166.0L65.8,165.4L65.3,165.1L65.2,164.4L65.2,164.0L64.6,163.8L64.4,163.4L64.6,163.0L65.3,162.9L65.2,162.4L65.7,161.8L65.5,161.3L65.8,161.0L65.8,160.4L66.6,160.1L67.3,160.2L67.7,159.8L68.5,159.3L68.9,159.2L69.2,158.8L69.6,158.9L70.1,159.0L70.1,157.6L69.8,156.3L70.0,155.3L70.7,154.4L70.5,153.7L69.9,153.3L70.1,152.5L70.6,152.6L71.1,152.1L70.7,151.5L70.4,151.1L69.9,150.6L70.7,150.4L71.2,150.1L72.2,150.6L72.8,150.4L73.4,150.6L73.9,150.2L74.2,150.6L74.5,151.3L75.1,151.3L75.6,151.8L76.3,151.9L76.8,151.6L77.2,151.3L78.0,151.0L78.5,150.7L78.7,150.2L79.2,150.0L78.7,149.9L78.2,149.4L78.2,148.7L77.9,148.3L78.1,147.9L78.1,147.4L78.8,147.6L79.0,148.0L79.7,147.9L79.9,147.6L80.3,147.3L80.6,147.2L81.2,146.8L81.7,146.6L82.1,146.4L82.7,146.6L83.0,146.1L83.3,145.6L83.8,145.8L84.2,145.6L84.6,146.0L84.5,146.6L84.9,147.0L84.9,147.6L84.3,148.1L84.0,148.7L84.2,149.4L84.6,149.7L84.5,150.3L85.2,150.4L85.6,151.2L86.3,151.4L86.8,151.2L87.0,150.9L87.3,150.2L87.7,150.1L88.4,150.2L89.0,150.6L89.3,150.3L89.9,150.3L90.4,150.1L90.6,149.8L91.3,149.4L91.8,149.9L92.3,149.9L92.8,150.1L93.3,149.8L93.9,149.9L94.4,149.7L94.7,149.0L95.0,148.4L95.5,148.0L95.9,147.6L96.3,147.2ZM185.3,48.2L185.0,48.0L184.6,47.7L184.6,47.0L184.4,46.3L184.9,46.6L184.8,47.3L184.6,47.9L184.0,47.9L183.4,48.0L183.3,48.3L183.0,48.8L182.9,49.2L183.2,49.6L182.7,50.1L182.4,50.2L181.9,49.9L181.5,50.4L181.2,50.9L180.6,50.6L180.1,51.2L179.5,51.2L179.1,51.0L178.6,50.6L178.3,50.1L178.0,49.7L177.6,49.3L177.3,48.8L176.9,48.5L177.1,48.1L177.2,47.7L178.0,47.7L178.3,47.1L178.0,46.5L177.9,46.1L177.5,45.7L176.9,45.7L176.3,45.3L175.8,44.9L176.0,44.5L176.0,44.1L176.5,43.8L176.8,43.4L176.7,43.0L177.2,42.7L178.0,43.0L178.4,42.8L178.7,42.5L178.3,42.6L177.7,42.7L177.6,43.0L177.2,42.9L176.7,42.8L176.5,42.4L176.6,41.9L176.6,41.1L176.6,40.4L176.6,39.9L176.8,39.5L177.1,39.7L177.6,39.7L178.3,39.4L178.0,38.8L178.3,38.5L178.7,38.3L179.4,38.3L179.6,37.8L179.5,37.0L179.9,36.9L180.6,36.9L180.8,36.2L181.3,35.8L181.9,35.7L182.5,35.9L182.8,35.5L183.0,34.8L182.9,34.3L182.9,33.6L183.2,33.1L183.7,33.2L184.1,32.6L183.9,31.9L184.0,31.5L184.4,31.1L184.9,31.1L185.6,30.9L185.5,30.2L185.6,29.7L185.8,29.3L186.3,29.1L186.6,28.7L187.0,28.2L186.6,27.6L186.9,27.0L187.0,26.5L187.4,26.1L187.5,25.7L187.5,25.3L187.7,24.8L187.7,24.2L187.8,23.9L188.4,23.6L188.9,23.3L189.3,22.7L189.7,22.3L189.8,21.9L190.1,21.4L190.2,21.0L190.5,20.7L191.0,20.8L191.5,20.6L191.4,20.2L191.1,19.9L191.1,19.5L191.4,19.1L191.2,18.6L190.8,18.2L190.4,18.3L189.9,18.2L189.6,18.8L189.1,18.7L188.7,19.1L189.4,19.0L189.9,19.1L190.4,19.0L190.6,18.7L190.5,18.3L190.4,17.8L190.5,17.2L190.7,16.6L191.1,16.6L191.3,16.0L192.0,15.8L192.5,16.0L193.1,15.9L193.8,15.8L193.8,15.4L194.0,14.9L194.5,14.5L194.5,13.9L195.2,13.9L195.7,13.9L195.8,13.2L196.2,12.6L195.8,12.1L196.4,12.1L196.5,11.6L197.0,11.6L197.4,11.4L197.8,11.7L198.3,11.9L198.7,11.6L198.8,11.0L198.8,10.5L199.4,10.3L200.1,10.3L200.5,10.0L200.8,9.7L201.2,10.1L201.9,10.4L201.8,9.6L202.2,9.1L202.3,8.7L202.9,8.5L203.4,8.9L203.6,8.1L204.2,8.1L204.3,7.3L205.0,7.1L205.0,6.6L205.6,6.9L206.1,6.9L206.2,7.2L206.8,7.5L207.2,7.2L207.9,7.3L208.5,7.0L209.0,6.6L209.1,7.2L209.7,7.3L210.1,7.0L210.6,7.3L211.3,7.6L210.9,8.3L211.5,8.6L211.5,9.1L212.1,9.4L212.8,9.2L213.3,9.4L213.6,9.9L213.2,9.6L212.4,9.9L211.9,10.1L211.8,10.9L211.6,11.6L211.7,12.2L212.2,12.4L212.1,13.1L212.5,13.3L213.0,12.9L213.4,13.2L210.7,15.2L210.6,12.4L209.0,11.2L206.5,12.8L206.1,14.9L204.8,17.2L202.6,16.8L200.8,15.6L198.8,15.2L197.9,18.0L195.4,17.6L194.8,19.5L193.0,21.0L192.5,23.2L191.4,25.4L190.3,26.5L190.1,29.2L189.0,31.6L189.4,33.5L187.6,33.5L186.6,35.8L186.9,38.9L187.0,41.9L187.7,42.2L187.0,45.1L186.3,46.5L186.0,48.5ZM203.8,27.5L201.2,27.5L200.1,29.6L199.8,31.9L198.9,34.2L197.2,35.5L195.8,37.4L194.4,38.9L194.1,41.3L194.0,43.7L196.0,45.4L196.4,47.1L195.0,49.0L193.3,50.1L193.3,52.5L192.8,54.4L192.3,55.9L190.4,56.2L189.7,57.9L187.8,57.9L187.4,55.9L186.6,53.1L186.0,50.7L185.3,48.2L186.0,48.5L186.3,46.5L187.0,45.1L187.7,42.2L187.0,41.9L186.9,38.9L186.6,35.8L187.6,33.5L189.4,33.5L189.0,31.6L190.1,29.2L190.3,26.5L191.4,25.4L192.5,23.2L193.0,21.0L194.8,19.5L195.4,17.6L197.9,18.0L198.8,15.2L200.5,17.2L202.9,19.9L203.1,22.5L203.6,24.7L203.2,26.1ZM195.4,53.6L196.5,51.5L196.2,53.1ZM181.7,59.2L181.2,58.5L181.0,57.4L180.7,56.0L181.2,54.9L181.4,54.2L181.7,53.6L182.3,53.5L183.2,53.3L183.6,52.8L184.4,52.0L184.8,53.0L184.1,54.6L184.5,55.1L185.0,55.4L184.8,56.0L184.0,56.7L183.4,57.4L183.3,58.2L183.5,58.8L183.6,59.4L182.3,59.6ZM185.3,57.2L186.6,56.2L187.4,57.2L186.7,58.9L185.4,58.4ZM183.4,57.9L184.7,57.7L184.7,58.7L183.7,58.7ZM179.5,62.8L181.2,62.4L182.2,61.6L181.7,59.2L183.6,59.4L185.0,61.4L187.0,60.7L188.8,60.2L189.7,61.6L189.7,64.0L190.4,65.9L190.8,68.4L189.8,68.4L187.3,70.0L186.9,70.2L189.1,73.5L188.0,74.3L188.0,76.0L186.6,75.8L184.4,76.2L183.2,76.0L181.6,75.6L180.3,75.8L180.2,74.6L181.2,72.8L179.0,72.4L178.5,71.1L178.2,69.1L177.9,66.6L179.2,66.1L179.6,64.3ZM189.7,61.6L192.5,60.7L194.4,59.7L195.5,59.4L196.4,60.4L197.7,60.4L201.9,60.4L202.9,61.6L203.5,64.5L202.5,65.4L203.1,67.0L203.8,68.6L202.2,72.2L201.5,72.6L198.7,72.0L197.2,71.5L196.0,71.7L194.4,70.0L192.7,69.8L190.8,68.4L190.4,65.9L189.7,64.0ZM173.1,68.2L174.3,67.5L175.2,66.4L175.9,65.2L176.3,63.8L177.3,62.8L179.5,62.8L179.6,64.3L179.2,66.1L177.9,66.6L178.2,69.1L178.5,71.1L177.7,71.7L176.3,70.6L175.5,70.9L173.8,68.9ZM173.1,68.2L173.8,68.9L175.5,70.9L176.3,70.6L177.7,71.7L179.0,72.4L181.2,72.8L180.2,74.6L180.3,75.8L179.5,76.2L178.2,78.5L179.2,79.4L179.5,80.8L179.0,82.4L180.3,83.2L180.3,83.6L178.9,84.9L176.9,84.4L175.2,84.2L173.9,84.9L174.1,86.3L171.9,86.1L170.5,85.5L168.6,85.3L166.9,84.4L167.8,82.0L167.9,80.0L166.5,77.1L165.5,76.0L163.2,75.4L162.8,74.1L164.5,73.3L167.2,73.7L166.9,71.3L167.7,72.0L169.6,71.7L171.2,70.6L171.8,69.3ZM181.7,86.3L182.9,85.1L183.0,87.1L182.6,88.2L181.9,87.4ZM174.1,86.3L174.1,87.3L172.6,88.4L170.6,89.0L169.8,90.8L169.1,91.8L169.8,93.0L168.6,94.5L167.2,95.8L166.4,96.6L163.2,96.8L162.0,97.9L160.5,97.0L159.0,95.9L158.8,94.5L159.5,92.7L159.1,91.6L159.7,90.5L159.8,88.8L160.7,87.8L160.1,87.1L157.8,87.1L157.0,87.3L156.3,85.1L158.1,83.8L161.3,84.0L164.4,84.2L166.9,84.4L168.6,85.3L170.5,85.5L171.9,86.1ZM172.9,91.6L174.1,91.0L174.3,91.6L173.8,92.1ZM178.2,78.5L179.5,76.2L180.3,75.8L181.6,75.6L183.2,76.0L184.3,77.3L184.0,78.5L182.6,78.5L181.4,79.2L179.5,79.4ZM183.2,76.0L184.4,76.2L186.6,75.8L188.0,76.0L188.0,74.3L189.1,73.5L190.8,72.8L193.5,73.7L193.8,75.0L192.8,77.1L192.3,77.7L190.3,78.3L187.1,77.7L184.3,77.3ZM186.9,70.2L187.3,70.0L189.8,68.4L190.8,68.4L192.7,69.8L194.4,70.0L196.0,71.7L193.8,73.3L193.5,73.7L190.8,72.8L189.1,73.5ZM198.4,78.9L199.8,78.7L200.8,76.0L202.1,75.0L204.9,75.6L207.3,74.6L209.5,77.3L209.6,80.2L211.6,80.6L210.3,81.6L210.2,83.8L207.9,83.0L205.6,84.0L202.1,83.6L201.5,82.2L199.9,81.6ZM198.7,88.0L199.4,86.7L201.2,86.5L202.2,87.6L201.8,88.8L199.4,89.2ZM221.0,96.6L220.4,96.8L220.0,97.0L219.3,97.0L218.6,96.8L218.1,97.1L217.4,97.7L216.8,97.8L216.1,98.1L215.7,97.6L215.0,97.2L214.2,96.8L213.0,96.6L212.8,97.2L212.6,97.5L211.8,97.5L211.0,97.5L210.3,97.2L209.3,96.8L208.7,96.6L208.3,96.3L208.3,95.4L208.2,94.9L207.4,94.4L206.9,94.0L207.3,93.2L207.6,91.8L207.1,91.8L206.8,91.8L206.7,91.4L206.8,90.8L207.7,90.3L208.6,90.1L210.0,90.0L210.7,89.9L210.9,89.4L210.9,88.6L212.3,88.9L214.0,88.6L215.8,87.6L216.9,87.1L218.2,87.2L219.3,87.1L220.4,88.1L221.4,88.4L222.4,88.5L224.3,89.0L225.4,88.9L226.4,89.0L227.4,88.3L228.5,88.0L229.4,88.0L229.9,88.0L230.5,88.4L231.4,88.8L231.6,89.6L231.7,90.6L232.5,90.9L233.2,91.4L232.8,91.9L232.5,92.7L232.6,93.3L232.5,93.8L233.2,94.9L233.2,95.9L232.1,95.6L230.7,95.8L230.2,96.0L229.8,96.1L228.9,96.2L227.8,96.1L227.2,96.1L226.4,96.6L225.3,96.7L223.5,96.6L222.5,97.2L221.7,97.5L221.3,98.0L221.0,98.2L221.1,97.2ZM206.6,89.7L206.5,89.2L207.0,87.6L208.3,86.9L209.3,87.1L209.5,87.8L210.7,88.6L209.3,89.0L208.3,89.5L206.9,90.5ZM215.4,99.8L216.4,99.1L218.7,98.6L217.9,99.8L216.4,100.5ZM161.4,70.4L162.2,70.5L162.9,70.6L163.3,70.2L163.5,69.8L164.0,69.6L164.5,70.0L165.1,69.5L165.2,69.1L165.7,68.7L166.4,68.8L166.8,69.2L167.4,69.1L168.1,68.7L168.7,69.1L169.5,69.1L169.9,68.9L170.1,68.3L170.5,68.1L170.9,67.8L171.3,68.0L170.8,67.7L170.4,67.3L171.1,67.2L171.2,66.6L171.3,65.8L171.7,65.3L172.0,65.0L171.9,64.5L171.5,64.5L170.9,64.4L170.2,64.2L169.9,63.8L169.3,63.4L169.7,63.0L169.5,62.4L169.4,61.8L169.0,61.3L168.9,60.9L169.1,60.2L168.5,59.7L167.8,59.9L167.8,59.4L167.6,58.8L167.8,58.3L167.2,57.7L166.5,57.4L166.6,57.1L166.4,56.4L165.7,56.8L165.3,56.8L164.8,56.4L165.3,55.9L165.8,56.0L165.9,55.5L165.8,54.9L165.3,54.2L165.7,53.3L166.1,52.4L166.7,52.3L166.0,52.2L164.9,51.6L164.3,51.6L163.8,52.0L164.3,51.5L165.3,51.0L165.2,50.5L165.2,49.6L164.4,49.0L163.6,49.1L162.8,49.2L162.4,49.6L161.5,49.9L161.0,50.5L161.5,51.3L161.3,52.3L161.9,53.2L162.1,54.1L161.9,54.5L161.5,55.2L161.1,54.9L160.7,54.9L161.3,55.6L161.1,56.3L161.5,57.0L161.7,57.7L161.9,58.3L161.7,58.8L162.4,59.1L162.7,59.4L163.2,59.5L163.7,59.7L164.0,59.6L164.5,59.2L164.8,59.8L164.2,60.6L164.8,60.8L165.2,61.9L165.1,62.6L164.9,63.1L164.6,62.8L164.0,62.6L163.4,62.6L163.1,63.1L163.4,63.7L163.5,64.3L163.7,64.7L163.5,65.4L162.9,65.9L163.0,66.4L162.6,66.5L162.1,66.6L162.9,66.8L164.0,66.7L164.4,67.3L164.9,67.5L164.5,68.1L163.9,68.3L163.5,68.3L163.1,68.4L162.9,69.2L161.7,69.5L161.8,70.0ZM155.3,67.0L155.6,66.6L156.2,66.6L156.7,67.0L157.4,67.0L158.0,66.5L158.8,65.5L159.7,65.4L160.5,65.7L160.1,64.9L160.5,64.2L160.5,63.6L161.0,62.8L161.1,62.3L161.2,62.0L161.5,61.3L161.7,60.4L161.4,60.1L161.2,59.7L161.1,58.9L160.7,58.4L160.2,58.7L159.6,59.1L158.9,58.4L157.8,58.4L157.6,59.0L157.2,59.3L157.5,60.0L157.3,60.4L156.9,60.6L156.6,60.9L156.1,60.9L155.3,60.9L155.0,61.3L154.8,62.2L155.2,62.7L155.6,63.1L155.9,63.4L156.0,63.8L156.3,64.5L155.8,65.2L155.6,65.8L155.2,65.9L154.7,65.9L155.2,66.5ZM167.2,45.4L168.1,43.7L168.4,45.1L167.7,46.0ZM159.0,53.3L160.7,50.1L160.3,51.5L159.3,52.3ZM164.8,48.5L165.8,47.9L165.5,49.0ZM205.1,105.4L208.6,106.3L210.7,106.8L213.6,105.8L215.4,106.3L218.1,106.1L219.1,109.1L218.3,111.7L217.1,111.0L215.9,108.2L215.6,108.9L217.1,111.8L218.6,114.7L220.0,117.8L222.0,120.9L205.1,120.9ZM218.1,106.1L219.1,103.4L219.4,103.1L220.3,102.9L220.0,104.2L220.0,105.8L219.3,109.1ZM150.7,112.0L153.1,111.0L155.3,109.1L155.7,107.4L155.6,105.8L156.4,103.9L158.8,102.0L160.7,99.5L161.1,98.4L162.0,98.2L165.2,99.3L166.4,99.6L167.1,100.7L167.1,103.2L167.8,104.6L164.5,105.6L164.4,106.8L162.4,108.2L160.3,108.9L157.1,110.4L157.1,112.0ZM150.7,112.0L157.1,112.0L157.1,114.7L152.4,114.7L152.4,118.6L151.0,119.4L151.0,122.0L145.3,122.0L145.5,120.9L146.7,118.3L148.3,116.3L148.9,114.4ZM145.5,110.8L146.6,110.5L146.2,111.5L145.7,111.5ZM147.0,111.3L147.6,111.2L147.6,111.8L147.0,111.8ZM148.9,111.3L149.9,110.4L149.7,111.2ZM143.9,110.2L144.3,110.2L144.2,110.7ZM149.9,109.9L150.4,109.5L150.3,110.0ZM274.2,91.9L275.9,90.1L278.7,89.9L281.1,88.0L283.6,86.9L283.7,84.7L284.3,81.0L286.8,80.6L287.5,76.7L291.1,76.9L291.4,74.3L293.2,72.6L294.4,72.6L295.8,74.6L298.2,76.0L298.9,80.6L302.5,81.4L305.2,82.8L306.6,85.5L311.7,85.9L317.4,87.4L318.8,87.8L322.4,86.3L325.9,85.7L328.5,83.8L328.6,81.2L331.1,81.6L334.2,80.0L335.3,78.5L339.9,77.7L337.3,75.0L334.2,75.4L334.5,73.3L335.5,71.1L337.0,71.7L339.2,70.0L341.3,65.7L340.2,64.3L345.1,62.6L348.7,65.0L347.3,90.8L343.4,89.9L341.9,89.2L339.5,91.2L337.3,92.3L336.9,93.8L338.7,95.9L341.3,94.9L343.7,96.3L340.9,98.1L339.2,99.8L340.6,101.5L341.6,104.1L343.0,106.6L342.3,108.2L343.0,109.1L340.9,112.3L339.5,115.5L337.3,117.0L335.9,118.6L333.1,119.8L331.6,120.5L327.4,121.7L325.9,123.5L325.5,121.7L323.8,121.4L323.1,121.7L321.3,119.7L319.3,118.9L316.7,120.0L314.9,120.3L313.6,122.1L312.0,121.7L310.6,120.9L310.2,117.8L308.3,117.0L309.7,112.3L308.2,111.0L306.3,109.4L303.9,109.5L300.3,111.8L299.8,111.8L296.1,112.6L294.8,111.7L291.8,111.5L289.0,110.2L286.1,107.9L284.7,107.9L282.6,106.6L281.6,106.3L281.7,103.2L282.6,100.7L280.4,98.9L277.6,98.1L276.2,96.3L275.6,96.1L276.0,93.6L274.5,93.4ZM296.1,121.2L295.1,121.4L293.2,121.7L292.5,123.7L290.4,124.7L289.0,126.7L286.5,129.1L285.0,129.9L283.4,131.0L283.7,133.6L283.0,135.8L283.1,138.3L282.1,139.7L280.7,140.3L279.7,141.4L278.0,139.0L276.9,136.1L275.5,133.6L274.5,130.7L273.7,128.5L273.0,125.5L273.0,122.4L272.6,120.6L271.9,122.4L269.5,122.6L267.6,120.5L269.1,119.7L267.6,119.2L266.5,118.3L266.5,118.3L267.6,117.4L270.5,117.2L269.3,115.2L268.5,112.8L269.6,111.5L271.8,111.7L273.2,110.0L274.6,108.2L275.5,106.6L276.6,104.6L275.6,103.6L274.6,102.4L275.2,100.3L279.0,98.9L280.4,98.9L282.6,100.7L281.7,103.2L281.6,106.3L282.6,106.6L284.7,107.9L283.6,110.2L287.5,112.5L290.4,113.7L294.8,114.0L294.8,111.7L295.9,112.6L296.8,113.4L299.8,113.4L300.3,111.8L303.9,109.5L306.3,109.4L307.9,111.0L307.5,112.8L304.9,113.9L304.0,115.8L302.2,117.8L301.8,120.9L300.8,120.9L299.6,119.4L299.3,117.8L300.6,116.3L297.2,115.8L296.5,114.7L294.9,115.0L294.9,117.0L295.8,119.1ZM257.1,115.9L260.5,115.8L263.9,115.6L264.4,116.6L265.4,118.0L266.5,118.3L266.5,118.3L267.6,117.4L270.5,117.2L269.3,115.2L268.5,112.8L269.6,111.5L271.8,111.7L273.2,110.0L274.6,108.2L275.5,106.6L276.6,104.6L275.6,103.6L274.6,102.4L275.2,100.3L279.0,98.9L277.6,98.1L276.2,96.3L275.6,96.1L272.6,96.6L271.2,97.5L270.8,100.1L269.1,101.5L268.3,103.2L268.1,105.1L265.9,105.9L263.9,106.8L263.7,108.6L260.5,109.2L258.4,109.2L256.1,108.6L257.3,110.4L258.8,111.2L258.8,112.8L259.5,113.7L257.4,114.4ZM283.0,139.3L283.7,139.1L285.0,140.9L286.0,142.6L285.7,143.9L284.1,144.6L283.3,144.0L282.9,141.6ZM242.9,117.5L244.3,117.5L246.3,117.5L248.3,115.6L249.3,114.5L249.7,115.3L249.6,116.4L248.9,117.5L248.0,119.8L244.3,119.5ZM305.0,145.2L305.5,144.9L306.5,144.9L307.4,145.2L308.2,145.6L308.6,146.0L309.3,146.4L309.5,147.0L309.6,147.6L310.4,148.4L311.2,148.7L311.7,149.4L312.4,150.2L312.7,150.5L313.2,150.7L314.1,151.1L314.6,151.6L315.2,151.7L315.4,152.0L315.9,152.6L316.7,153.0L317.0,153.2L317.6,153.6L317.7,154.2L318.1,155.1L318.5,155.9L318.9,156.4L319.8,156.8L320.3,157.3L320.4,158.2L320.6,158.8L320.3,160.1L320.0,161.3L319.4,160.9L319.0,160.9L318.5,161.0L318.1,161.3L317.6,160.7L316.4,160.0L315.9,159.0L315.0,158.7L314.0,158.2L313.4,157.7L313.4,157.1L313.1,156.6L312.8,156.1L312.4,155.3L312.1,155.0L312.1,154.4L311.8,154.1L311.1,153.9L310.6,153.3L310.3,152.3L310.4,151.9L310.2,151.4L310.0,151.0L309.6,150.4L309.3,149.9L308.8,149.6L308.2,148.7L307.5,148.4L306.9,148.0L306.2,147.3L306.0,146.7L305.3,146.2L305.0,145.7ZM311.9,143.9L313.3,144.9L314.7,144.2L316.6,146.6L316.7,149.0L317.7,151.0L316.7,151.2L313.6,149.0L312.4,146.6L312.1,145.2ZM324.5,150.9L325.0,150.7L325.4,150.9L325.9,150.6L326.4,150.1L326.8,149.8L327.2,149.8L327.8,149.4L328.2,149.2L328.7,149.3L329.3,148.6L330.2,148.4L330.9,148.3L331.5,147.5L331.7,146.6L332.3,146.2L332.9,145.5L333.5,145.5L334.2,145.0L334.5,144.2L334.9,143.9L335.2,143.8L335.5,143.4L335.9,143.0L336.0,143.4L336.5,143.6L336.9,144.2L337.3,144.5L337.9,145.1L338.6,145.3L339.0,145.6L338.6,145.9L338.3,146.0L337.6,146.2L337.3,146.6L337.0,147.1L337.0,147.5L336.6,148.0L336.6,148.6L336.9,149.2L337.1,149.6L337.3,149.9L337.7,150.4L338.3,150.8L338.6,151.1L338.7,151.6L338.1,151.5L337.5,151.8L337.0,151.9L336.8,152.5L336.8,153.2L336.9,153.6L336.6,154.1L336.2,154.8L335.8,155.1L335.2,155.6L335.3,156.2L335.2,156.9L334.9,157.4L334.9,158.0L334.3,158.2L333.3,158.3L332.8,158.5L332.5,158.7L332.1,158.5L331.6,158.1L330.9,158.1L330.2,157.7L329.7,157.6L329.3,157.3L328.6,157.5L328.1,157.6L327.6,157.0L326.9,156.9L326.2,156.6L326.2,156.0L326.2,155.6L326.0,155.2L325.9,154.8L325.7,154.4L325.5,154.0L324.8,153.7L324.6,153.2L324.7,152.7L324.5,152.3L324.4,151.5ZM319.1,162.7L321.0,161.5L323.8,162.4L327.1,162.1L329.8,162.8L332.3,164.0L332.3,165.4L328.8,164.8L324.5,164.0L321.0,163.6ZM319.3,155.6L320.5,155.3L321.3,157.3L320.1,156.7ZM323.1,121.7L321.7,122.4L319.8,125.5L321.0,127.7L323.5,129.9L324.8,134.4L324.5,136.5L321.7,138.1L319.3,140.6L318.5,138.7L318.1,138.1L320.3,136.8L322.4,135.4L322.4,132.2L321.7,129.9L318.8,126.2L317.4,124.7L318.5,123.5L316.0,122.7L314.9,120.3L316.7,120.0L319.3,118.9L321.3,119.7Z" fill="#d6dbf4" fill-opacity=".82" stroke="#0a0a10" stroke-width="0.9" stroke-linejoin="round"/>
<path d="M-8.3,72.8L-5.4,72.8L34.1,72.8L34.7,72.2L37.2,73.7L42.2,75.0L43.9,74.3L48.9,77.5L50.0,78.5L50.7,79.6L52.2,80.6L52.3,85.1L51.5,86.7L52.2,87.3L57.1,85.5L57.1,84.4L60.8,82.8L63.3,81.2L67.8,81.2L69.2,80.2L69.9,78.1L71.1,76.2L73.1,77.1L73.1,79.8L74.2,81.0L74.2,81.8L72.1,82.6L69.9,83.8L68.9,85.9L69.7,87.4L68.1,88.0L66.4,88.6L64.5,89.5L66.4,89.2L64.3,89.9L64.0,91.6L62.8,92.7L62.1,91.8L62.7,93.6L61.7,95.8L61.0,92.7L60.7,94.9L61.4,96.3L61.7,98.1L62.0,99.3L60.6,100.3L58.9,101.5L57.1,102.4L55.7,103.9L54.3,105.3L53.7,107.4L54.6,110.2L55.3,112.3L55.7,114.2L55.2,115.9L54.2,115.9L53.2,114.7L51.9,112.1L51.9,109.9L50.3,108.2L48.6,108.7L47.2,107.6L45.1,107.7L42.9,107.7L42.4,109.5L40.8,109.5L39.4,108.9L36.5,108.6L34.7,109.2L33.0,110.7L31.3,112.3L31.3,114.7L28.7,114.0L27.8,112.1L26.3,109.9L25.1,108.6L23.4,108.7L22.7,109.9L20.9,108.9L20.2,107.1L18.0,105.3L15.6,105.3L15.6,106.1L11.6,106.1L6.2,104.1L3.0,104.1L1.0,101.5L-1.9,100.7L-4.0,97.2L-4.7,94.9L-6.9,90.8L-7.6,85.1L-6.9,79.2L-7.9,74.1Z" fill="#9aa0d3" stroke="#0a0a10" stroke-width="0.9" stroke-linejoin="round"/>
<path d="M184.0,47.9L183.5,48.3L183.0,48.8L182.6,48.8L182.2,49.1L182.5,49.6L181.9,50.2L181.5,50.4L181.2,50.9L180.8,51.0L180.3,50.9L180.0,51.2L179.5,51.2L179.2,50.5L178.7,50.4L178.8,49.8L178.7,49.5L178.2,49.0L177.6,49.3L177.6,48.9L177.9,48.3L177.5,47.8L177.2,47.7L177.5,47.2L177.9,47.6L178.3,47.1L178.0,46.7L178.2,46.1L177.8,46.0L177.4,46.1L176.9,45.7L176.5,45.7L175.9,45.6L176.3,44.9L175.8,44.5L176.2,44.1L176.5,43.6L176.8,43.4L177.4,43.7L178.0,43.5L178.4,43.7L178.5,43.2L178.7,42.5L178.0,42.2L177.6,41.9L177.1,41.5L176.6,41.9L176.3,41.9L175.8,41.9L176.0,41.2L175.5,40.9L176.4,41.2L176.7,40.4L176.4,40.0L176.8,39.5L176.4,39.2L176.5,38.7L176.7,38.4L177.2,38.0L177.6,38.5L178.0,38.8L178.5,38.9L178.7,38.3L178.7,37.6L179.3,37.7L179.5,37.0L179.9,36.8L180.1,36.5L180.2,36.0L180.4,35.7L180.8,35.3L181.3,35.8L181.7,36.4L181.9,35.7L182.5,35.9L182.9,35.6L183.0,34.8L183.5,34.7L183.6,34.1L183.5,33.6L183.7,33.2L184.4,33.2L184.8,32.8L185.0,32.4L184.8,31.7L185.4,31.6L185.6,30.9L185.5,30.4L186.2,30.1L185.5,30.0L185.7,29.3L185.7,28.6L186.1,28.4L186.4,27.9L187.0,28.2L187.2,27.6L187.5,27.1L187.9,27.2L188.3,27.1L187.8,26.9L187.9,26.3L187.4,26.1L187.1,25.5L187.4,25.0L187.9,24.5L188.5,24.8L188.3,24.3L188.4,23.6L188.2,23.3L188.0,22.8L188.1,22.2L188.6,22.2L189.1,22.1L189.6,22.4L189.9,21.9L190.1,21.4L190.4,20.8L190.1,20.4L189.7,19.9L190.3,20.0L190.7,19.6L191.0,19.0L191.4,19.1L190.9,19.6L190.9,20.0L190.5,19.8L189.8,19.4L189.5,18.9L189.0,18.7L188.7,19.1L189.3,19.1L189.8,18.8L190.0,18.1L189.6,17.8L190.0,17.7L190.5,17.2L191.1,17.4L191.4,17.6L191.7,17.1L192.2,17.2L192.9,16.8L193.0,16.3L192.5,16.0L192.6,15.7L192.7,15.2L193.1,15.6L193.6,15.5L194.0,14.9L194.5,15.0L194.8,14.5L195.1,13.8L195.7,13.8L195.8,13.2L196.2,12.8L196.1,12.1L196.5,11.6L196.9,12.1L197.3,11.9L198.0,12.1L198.7,12.1L198.7,11.6L199.1,11.0L199.2,10.5L199.6,10.3L200.1,10.3L200.5,10.0L200.7,9.5L201.3,9.5L201.9,9.6L202.2,9.1L202.7,9.8L203.6,9.4L203.7,8.8L204.0,8.5L204.1,7.8L204.3,7.3L204.7,7.0L204.9,6.7L205.4,7.2L206.1,6.9L206.5,6.9L206.9,6.2L207.2,6.7L207.5,6.9L207.9,7.3L208.3,6.7L209.0,6.7L209.4,7.1L209.7,7.3L209.6,7.8L209.9,8.2L210.7,8.1L211.5,8.2L211.9,8.6L211.5,9.1M162.4,49.6L162.7,50.4L162.1,50.8L161.7,50.4L161.1,50.8L161.5,50.9L161.6,51.5L161.1,51.9L161.3,52.3L160.6,52.3L160.5,53.1L160.2,53.6L160.1,54.1L160.9,54.1L160.7,54.8L161.5,55.2L161.2,54.6L160.7,54.9L160.5,55.5L161.1,55.9L161.2,56.8L162.1,56.7L162.0,57.4L161.7,57.7L162.2,57.7L162.3,58.3L162.0,58.9L162.7,59.4M155.3,67.0L155.2,66.6L155.3,66.2L154.7,65.9L155.1,65.4L155.2,64.9L155.6,64.8L156.3,64.5L156.2,63.9L155.7,63.5L155.6,63.1L156.0,62.5L155.9,61.9L155.4,61.4L155.3,60.9L155.6,61.3L156.3,61.2L156.8,60.7L157.3,60.4L157.4,59.9L158.1,59.7L157.7,59.1L157.8,58.4M77.6,44.5L78.5,44.5L78.7,45.0L79.1,45.5L78.8,46.0L79.0,46.7L79.6,46.7L80.0,47.4L79.2,47.9L78.7,48.3L78.1,48.9L78.8,49.1L78.7,50.2L78.6,51.4L79.6,51.8L80.5,51.8L81.3,52.0L81.2,52.6L81.7,53.2L82.3,53.4L82.3,53.9L82.8,54.7L82.3,55.4L82.6,56.5L83.6,56.5L84.2,56.5L85.0,56.3L85.8,56.7L85.8,57.4L84.9,57.5L84.9,58.4L85.6,58.3L85.8,58.7L85.5,59.5L86.1,59.9L86.2,60.3L86.6,60.7L87.0,60.5L87.7,60.7L87.9,61.3L88.4,61.4L88.8,61.4L89.9,61.3L90.2,62.1L89.7,62.6L89.9,63.3L90.0,64.0L90.2,64.5L90.2,64.9L90.3,65.3L90.0,65.7L90.3,66.1" fill="none" stroke="#0a0a10" stroke-width="1.1" stroke-linejoin="round"/>
<line x1="0" y1="153.1" x2="340" y2="153.1" stroke="#dedede" stroke-width="1.9" stroke-dasharray="5.6,1.9" opacity=".75"/>
<text x="29.5" y="80.0" font-size="9.2" font-style="italic" fill="#5c67ad" text-anchor="middle" >NORTH</text>
<text x="28.5" y="89.5" font-size="9.2" font-style="italic" fill="#5c67ad" text-anchor="middle" >AMERICA</text>
<text x="109.6" y="106.5" font-size="8.6" fill="#a6a6a6" text-anchor="middle">Atlantic</text>
<text x="109.6" y="115.5" font-size="8.6" fill="#a6a6a6" text-anchor="middle">Ocean</text>
<text x="191.8" y="128.2" font-size="9.4" font-style="italic" fill="#7d7d7d" text-anchor="middle" >AFRICA</text>
<text x="303.5" y="54.5" font-size="9.2" font-style="italic" fill="#7d7d7d" text-anchor="middle" >ASIA</text>
<text x="91.8" y="167.5" font-size="9.4" font-style="italic" fill="#a4a8c2" text-anchor="middle" >SOUTH</text>
<text x="92.2" y="177.3" font-size="9.4" font-style="italic" fill="#a4a8c2" text-anchor="middle" >AMERICA</text>
<rect x="118.5" y="159.10000000000002" width="221.5" height="14" fill="#f5f5f5" opacity=".72"/>
<text x="121" y="169.79999999999995" font-size="9.6" fill="#1c1c1c" textLength="85.8" lengthAdjust="spacingAndGlyphs">Keyboard shortcuts</text>
<text x="219.8" y="169.79999999999995" font-size="9.6" fill="#1c1c1c" textLength="76.5" lengthAdjust="spacingAndGlyphs">Map data ©2026</text>
<rect x="300.2" y="159.10000000000002" width="0.8" height="14" fill="#c4c4c4"/>
<text x="307.3" y="169.79999999999995" font-size="9.6" fill="#1c1c1c" textLength="27" lengthAdjust="spacingAndGlyphs">Terms</text>
<text x="9.8" y="164.70000000000005" font-size="18.6" fill="#4a4a4a" stroke="#4a4a4a" stroke-width="3.3" stroke-linejoin="round" textLength="56.2" lengthAdjust="spacingAndGlyphs">Google</text>
<text x="9.8" y="164.70000000000005" font-size="18.6" fill="#fff" stroke="#fff" stroke-width=".75" stroke-linejoin="round" textLength="56.2" lengthAdjust="spacingAndGlyphs">Google</text>
<defs><filter id="sh" x="-20%" y="-20%" width="140%" height="140%"><feDropShadow dx="0" dy="0.8" stdDeviation="1" flood-color="#000" flood-opacity=".28"/></filter></defs>
<rect x="290" y="35.5" width="40" height="14.2" rx="2" fill="#fff" filter="url(#sh)"/>
<rect x="290" y="-10.5" width="40" height="46.2" rx="2" fill="#fff" filter="url(#sh)"/>
<rect x="301" y="36.69999999999999" width="5.8" height="2.3" fill="#2a2a2a"/><rect x="313" y="36.69999999999999" width="6" height="2.3" fill="#2a2a2a"/>
<g fill="#f7b738" stroke="#c9902f" stroke-width=".7" stroke-linejoin="round"><path d="M306.9,11.7 L312.1,11.7 Q314.1,12.0 314.9,14.3 L317.6,20.9 Q317.4,22.3 316.0,21.9 L314.1,17.9 L314.3,30.3 Q312.3,31.3 310.3,30.3 L310.0,23.7 L309.0,23.7 L308.7,30.3 Q306.7,31.3 304.7,30.3 L304.9,17.9 L303.0,21.9 Q301.6,22.3 301.4,20.9 L304.1,14.3 Q304.9,12.0 306.9,11.7Z"/><circle cx="309.5" cy="6.7" r="5.1" stroke="#a98a55"/></g>
<path d="M307.1,12.0 L309.5,15.9 L311.9,12.0Z" fill="#d6932c"/>
<rect x="290" y="68.0" width="40" height="81.3" rx="2" fill="#fff" filter="url(#sh)"/>
<rect x="295" y="108.10000000000002" width="30" height="1" fill="#e6e6e6"/>
<path d="M301.4,87.89999999999998h16.8M309.8,79.5v16.8" stroke="#5a5a5a" stroke-width="2.1" fill="none"/>
<path d="M301.6,129.10000000000002h16.6" stroke="#bdbdbd" stroke-width="2.1" fill="none"/>
</svg>
<div class="t" style="left:18px;top:568.6px;font-size:3.9px;color:#333;font-weight:bold">New users</div>
<div class="t" style="left:42.8px;top:568.8px;font-size:4px;color:#555">1</div>
<div class="c" style="left:45.8px;top:567.2px;width:1.7px;height:7.4px;background:#cfd3ed"></div>
<div class="c" style="left:47.2px;top:567.2px;width:3.3px;height:7.4px;background:#b7bce2"></div>
<div class="c" style="left:50.2px;top:567.2px;width:5.3px;height:7.4px;background:#9299d0"></div>
<div class="c" style="left:55.2px;top:567.2px;width:19.1px;height:7.4px;background:#6b73bb"></div>
<div class="t" style="left:74.9px;top:568.8px;font-size:4px;color:#555">2,813</div>
</div>
</body></html>
